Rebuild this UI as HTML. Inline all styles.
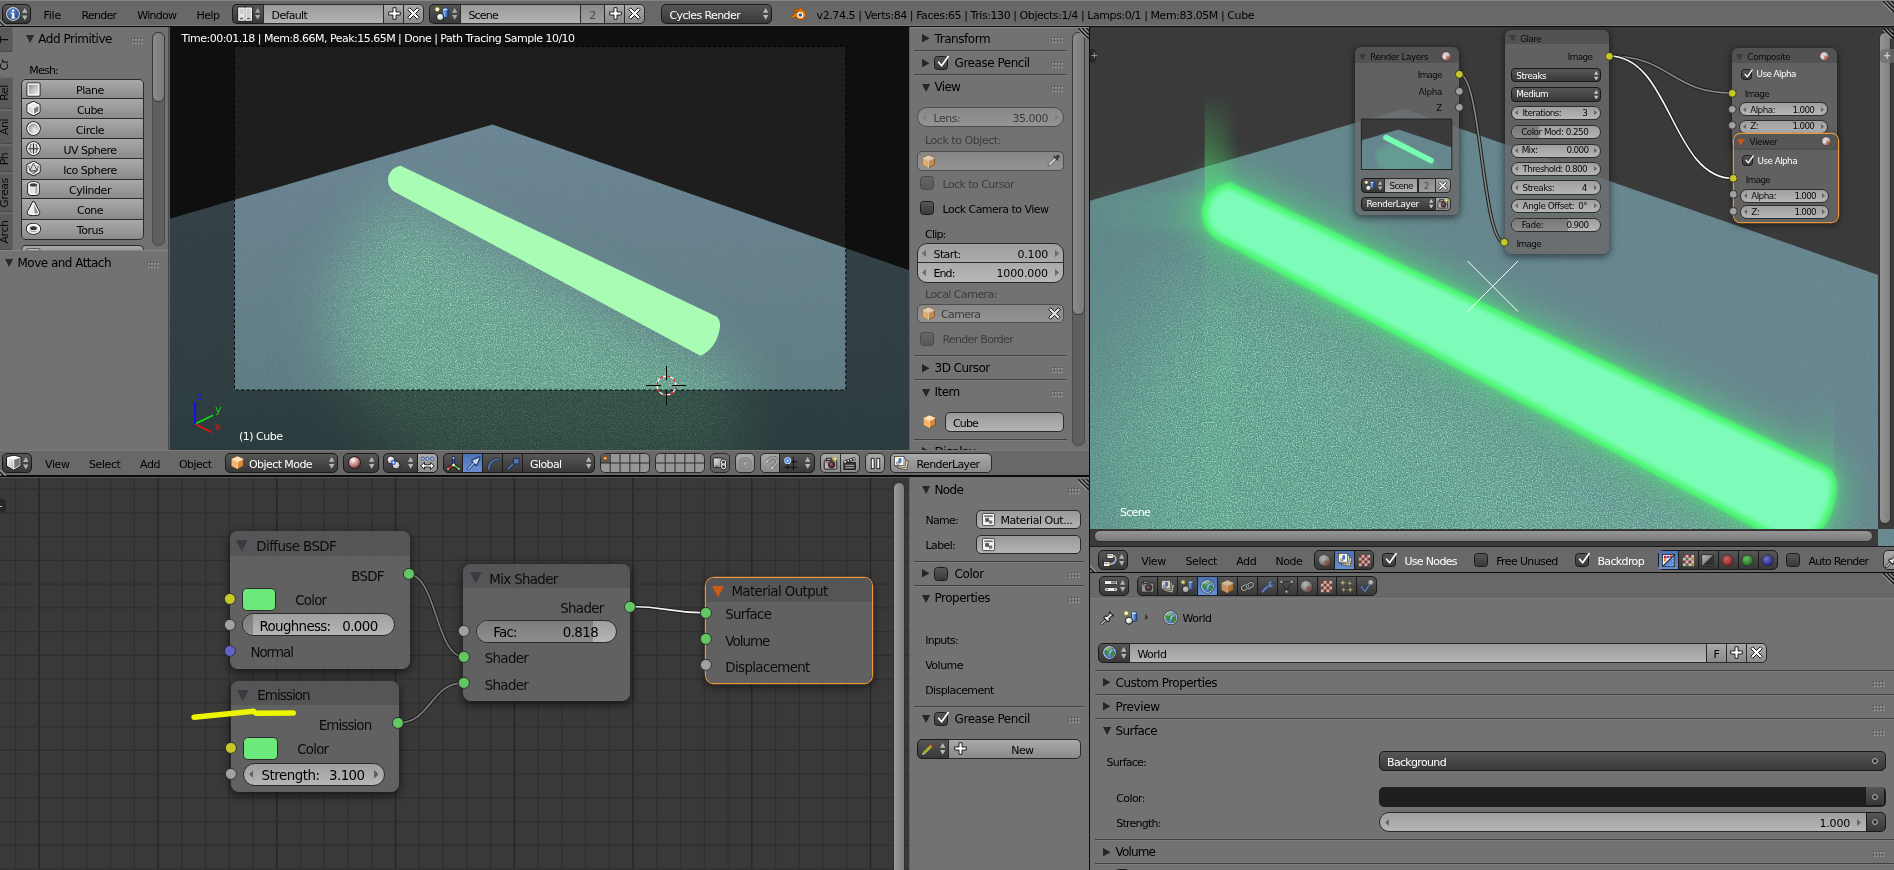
<!DOCTYPE html><html><head><meta charset="utf-8"><title>Blender</title><style>
html,body{margin:0;padding:0;background:#727272;}
body{width:1894px;height:870px;overflow:hidden;position:relative;font-family:"DejaVu Sans","Liberation Sans",sans-serif;}
.a{position:absolute;box-sizing:border-box}
.t{position:absolute;white-space:nowrap;font-family:"DejaVu Sans","Liberation Sans",sans-serif;}
.num{border:1px solid #2a2a2a;background:linear-gradient(#9f9f9f,#b6b6b6);}
.menu{border:1px solid #1a1a1a;background:linear-gradient(#565656,#383838);}
.tool{border:1px solid #2a2a2a;background:linear-gradient(#a9a9a9,#8a8a8a);}
.txt{border:1px solid #2a2a2a;background:linear-gradient(#999,#b4b4b4);}
.opt{border:1px solid #1a1a1a;background:linear-gradient(#565656,#3a3a3a);border-radius:3.5px}
.sel{background:linear-gradient(#4a72b4,#668ed0);}
.sb{border:1px solid #333;background:linear-gradient(90deg,#8c8c8c,#7a7a7a);}
.sbh{border:1px solid #333;background:linear-gradient(#8c8c8c,#7a7a7a);}
.node{border-radius:8px;background:rgba(100,100,100,.93);box-shadow:0 3px 9px 1px rgba(0,0,0,.55);}
.nhdr{border-radius:8px 8px 0 0;background:rgba(70,68,76,.45);}
</style></head><body><div id="root" style="position:absolute;left:0;top:0;width:1894px;height:870px;will-change:transform">
<div class="a " style="left:0px;top:0px;width:1894px;height:26px;background:#686868;border-top:1px solid #858585"></div>
<div class="a " style="left:0px;top:26px;width:1894px;height:1px;background:#0a0a0a"></div>
<div class="a " style="left:0px;top:27px;width:1089px;height:423px;background:#727272"></div>
<div class="a " style="left:0px;top:450px;width:1089px;height:26px;background:#686868"></div>
<div class="a " style="left:0px;top:475px;width:1089px;height:2px;background:#0a0a0a"></div>
<div class="a grid" style="left:0px;top:477px;width:909px;height:393px;background:#393939"></div>
<div class="a " style="left:909px;top:477px;width:180px;height:393px;background:#727272"></div>
<div class="a " style="left:1089px;top:27px;width:1px;height:843px;background:#0a0a0a"></div>
<div class="a " style="left:1090px;top:27px;width:804px;height:520px;background:#3a3a3a"></div>
<div class="a " style="left:1090px;top:546px;width:804px;height:1px;background:#1c1c1c"></div>
<div class="a " style="left:1090px;top:547px;width:804px;height:25px;background:#686868"></div>
<div class="a " style="left:1090px;top:572px;width:804px;height:1px;background:#0a0a0a"></div>
<div class="a " style="left:1090px;top:573px;width:804px;height:297px;background:#727272"></div>
<div class="a " style="left:1090px;top:573px;width:804px;height:25px;background:#686868"></div>
<svg class="a" style="left:169px;top:27px;" width="740" height="423" viewBox="169 27 740 423"><defs><linearGradient id="flo" x1="0" y1="124" x2="0" y2="450" gradientUnits="userSpaceOnUse"><stop offset="0" stop-color="#6a8593"/><stop offset=".5" stop-color="#637f89"/><stop offset=".8" stop-color="#5d7c82"/><stop offset="1" stop-color="#54767a"/></linearGradient><filter id="bl40" x="-50%" y="-50%" width="200%" height="200%"><feGaussianBlur stdDeviation="30"/></filter><filter id="bl12" x="-50%" y="-50%" width="200%" height="200%"><feGaussianBlur stdDeviation="14"/></filter><filter id="nz" x="0" y="0" width="100%" height="100%"><feTurbulence type="fractalNoise" baseFrequency="0.85" numOctaves="2" seed="7"/><feColorMatrix values="0 0 0 0 .42  0 0 0 0 .82  0 0 0 0 .58  2.2 0 0 0 -.98"/></filter><filter id="nzd" x="0" y="0" width="100%" height="100%"><feTurbulence type="fractalNoise" baseFrequency="0.9" numOctaves="2" seed="11"/><feColorMatrix values="0 0 0 0 .27  0 0 0 0 .33  0 0 0 0 .4  1.6 0 0 0 -.75"/></filter><mask id="gm3"><rect x="169" y="27" width="740" height="423" fill="#000"/><g filter="url(#bl40)"><path d="M392 195 L700 356 L740 380 L735 470 L430 470 L350 400 L330 300z" fill="#fff"/></g></mask><clipPath id="floorclip"><path d="M492.5 124.5 L909 270.3 V450 H169 V219z"/></clipPath></defs><rect x="169" y="27" width="740" height="423" fill="#1e1e1e"/><path d="M492.5 124.5 L909 270.3 V450 H169 V219z" fill="url(#flo)"/><g clip-path="url(#floorclip)"><g filter="url(#bl40)" opacity=".36"><path d="M392 195 L700 356 L740 380 L735 470 L430 470 L350 400 L330 300z" fill="#66d095"/></g><rect x="169" y="27" width="740" height="423" filter="url(#nzd)" opacity=".5"/><rect x="169" y="27" width="740" height="423" filter="url(#nz)" mask="url(#gm3)"/></g><path d="M400.6 165.7 L716 316.2 Q720.5 319 720 327 Q717 348 700.4 355.8 L394 191.5 A14.3 14.3 0 0 1 400.6 165.7z" fill="#a8fcb4"/><path d="M169 27H909V450H169z M234.5 46.5V390H845.8V46.5z" fill="#000" fill-opacity=".5" fill-rule="evenodd"/><rect x="234.5" y="46.5" width="611.3" height="343.5" fill="none" stroke="#000" stroke-width="1" stroke-dasharray="3 2.5"/><g fill="none"><circle cx="666.5" cy="385.5" r="9.5" stroke="#fff" stroke-width="1.2"/><circle cx="666.5" cy="385.5" r="9.5" stroke="#e01010" stroke-width="1.2" stroke-dasharray="3.7 3.76"/><path d="M666.5 366V380M666.5 391V405M646 385.5H661M672 385.5H686" stroke="#000" stroke-width="1"/></g><path d="M195 424L213 415.300" stroke="#10e010" stroke-width="1.800"/><path d="M195 424L212 432.500" stroke="#e81010" stroke-width="1.800"/><path d="M195 424.500V402" stroke="#1010f0" stroke-width="2.100"/></svg>
<div class="a " style="left:169px;top:27px;width:1px;height:423px;background:#5c5c5c"></div>
<div class="t" style="left:181.60px;top:29.72px;font-size:11px;line-height:17px;letter-spacing:-0.512px;color:#fff;">Time:00:01.18 | Mem:8.66M, Peak:15.65M | Done | Path Tracing Sample 10/10</div>
<div class="t" style="left:239.00px;top:427.72px;font-size:11px;line-height:17px;letter-spacing:-0.498px;color:#fff;">(1) Cube</div>
<div class="t" style="left:197.00px;top:388.22px;font-size:11px;line-height:17px;letter-spacing:0.000px;color:#1a1af0;">z</div>
<div class="t" style="left:215.00px;top:401.22px;font-size:11px;line-height:17px;letter-spacing:0.000px;color:#18d018;">y</div>
<div class="t" style="left:214.50px;top:418.22px;font-size:11px;line-height:17px;letter-spacing:0.000px;color:#e01818;">x</div>
<div class="a " style="left:0px;top:25px;width:1894px;height:1px;background:#7c7c7c"></div>
<div class="a menu" style="left:2px;top:4px;width:29px;height:20px;border-radius:5px"></div>
<svg class="a" style="left:5px;top:6px;" width="16" height="16" viewBox="0 0 16 16"><defs><radialGradient id="gi" cx=".4" cy=".3" r=".8"><stop offset="0" stop-color="#5b8ad0"/><stop offset="1" stop-color="#1c3f7c"/></radialGradient></defs><circle cx="8" cy="8" r="6.6" fill="url(#gi)" stroke="#e8e8e8" stroke-width="1.1"/><circle cx="8" cy="8" r="7.3" fill="none" stroke="#222" stroke-width=".6"/><rect x="7" y="3.6" width="2.2" height="2" fill="#fff"/><path d="M6.2 6.8h3v4.6h1.1v1.2H6v-1.2h1.1V8H6.2z" fill="#fff"/></svg>
<svg class="a" style="left:21.65px;top:7.825px;" width="5.7" height="12.35" viewBox="0 0 6 13"><path d="M0 5.200L3 0L6 5.200z M0 7.800L3 13L6 7.800z" fill="#b0b0b0"/></svg>
<div class="t" style="left:43.40px;top:6.62px;font-size:11px;line-height:17px;letter-spacing:-0.177px;color:#000;">File</div>
<div class="t" style="left:81.60px;top:6.62px;font-size:11px;line-height:17px;letter-spacing:-0.760px;color:#000;">Render</div>
<div class="t" style="left:137.20px;top:6.62px;font-size:11px;line-height:17px;letter-spacing:-0.695px;color:#000;">Window</div>
<div class="t" style="left:196.50px;top:6.62px;font-size:11px;line-height:17px;letter-spacing:-0.569px;color:#000;">Help</div>
<div class="a menu" style="left:232px;top:4px;width:32px;height:20px;border-radius:5px 0 0 5px;border-right:none"></div>
<svg class="a" style="left:236.5px;top:6px;" width="16" height="16" viewBox="0 0 16 16"><rect x="1.800" y="2" width="5.400" height="7" fill="#c8c8c8" stroke="#161616" stroke-width="2.600"/><rect x="1.800" y="9.800" width="5.400" height="4.400" fill="#c8c8c8" stroke="#161616" stroke-width="2.600"/><rect x="8.800" y="2" width="5.600" height="12.200" fill="#c8c8c8" stroke="#161616" stroke-width="2.600"/><rect x="1.800" y="2" width="5.400" height="7" fill="#cdcdcd" stroke="#fbfbfb" stroke-width="1.100"/><rect x="1.800" y="9.800" width="5.400" height="4.400" fill="#cdcdcd" stroke="#fbfbfb" stroke-width="1.100"/><rect x="8.800" y="2" width="5.600" height="12.200" fill="#cdcdcd" stroke="#fbfbfb" stroke-width="1.100"/><rect x="3" y="12.200" width="3" height="1" fill="#444"/><rect x="10" y="12.200" width="3.200" height="1" fill="#444"/></svg>
<svg class="a" style="left:254.8px;top:8.15px;" width="5.4" height="11.7" viewBox="0 0 6 13"><path d="M0 5.200L3 0L6 5.200z M0 7.800L3 13L6 7.800z" fill="#a6a6a6"/></svg>
<div class="a txt" style="left:263px;top:4px;width:121px;height:20px;border-radius:0;border-left:1px solid #2a2a2a"></div>
<div class="t" style="left:271.60px;top:6.62px;font-size:11px;line-height:17px;letter-spacing:-0.670px;color:#000;">Default</div>
<div class="a tool" style="left:383px;top:4px;width:21px;height:20px;border-radius:0;border-left:1px solid #2a2a2a"></div>
<svg class="a" style="left:386.5px;top:6px;" width="15" height="15" viewBox="0 0 16 16"><path d="M6.400 1.800h3.200v4.600h4.600v3.200h-4.600v4.600h-3.200v-4.600h-4.600v-3.200h4.600z" fill="#fff" stroke="#151515" stroke-width="1" stroke-linejoin="round"/></svg>
<div class="a tool" style="left:403px;top:4px;width:21px;height:20px;border-radius:0 5px 5px 0"></div>
<svg class="a" style="left:405.5px;top:6px;" width="15" height="15" viewBox="0 0 16 16"><g transform="rotate(45 8 8)"><path d="M6.500 .800h3v5.700h5.700v3h-5.700v5.700h-3v-5.700h-5.700v-3h5.700z" fill="#fff" stroke="#151515" stroke-width="1" stroke-linejoin="round"/></g></svg>
<div class="a menu" style="left:429px;top:4px;width:32px;height:20px;border-radius:5px 0 0 5px;border-right:none"></div>
<svg class="a" style="left:434px;top:6px;" width="16" height="16" viewBox="0 0 16 16"><defs><radialGradient id="gs" cx=".4" cy=".35" r=".75"><stop offset="0" stop-color="#fff"/><stop offset=".6" stop-color="#d0d0d0"/><stop offset="1" stop-color="#6a6a6a"/></radialGradient><linearGradient id="gc" x1="0" x2="1"><stop offset="0" stop-color="#cfe2fb"/><stop offset=".45" stop-color="#5d8fdc"/><stop offset="1" stop-color="#1f4a9a"/></linearGradient><radialGradient id="gl" cx=".5" cy=".5" r=".5"><stop offset="0" stop-color="#fff"/><stop offset=".45" stop-color="#fff"/><stop offset=".6" stop-color="#d9cf3a"/><stop offset="1" stop-color="#b0a820" stop-opacity=".2"/></radialGradient></defs><path d="M8.800 3.200C8.800 1.500 14.200 1.500 14.200 3.200V10.300C14.200 12 8.800 12 8.800 10.300z" fill="url(#gc)" stroke="#15306a" stroke-width=".9"/><ellipse cx="11.500" cy="3.300" rx="2.300" ry=".9" fill="#e6f0ff" opacity=".8"/><circle cx="6.200" cy="11" r="3.700" fill="url(#gs)" stroke="#1c1c1c" stroke-width="1"/><circle cx="3.300" cy="3.300" r="2.700" fill="url(#gl)"/></svg>
<svg class="a" style="left:451.7px;top:8.15px;" width="5.4" height="11.7" viewBox="0 0 6 13"><path d="M0 5.200L3 0L6 5.200z M0 7.800L3 13L6 7.800z" fill="#a6a6a6"/></svg>
<div class="a txt" style="left:460px;top:4px;width:121px;height:20px;border-radius:0"></div>
<div class="t" style="left:468.40px;top:6.62px;font-size:11px;line-height:17px;letter-spacing:-0.788px;color:#000;">Scene</div>
<div class="a txt" style="left:580px;top:4px;width:25px;height:20px;border-radius:0;background:linear-gradient(#8c8c8c,#9d9d9d)"></div>
<div class="t" style="left:589.28px;top:6.62px;font-size:11px;line-height:17px;letter-spacing:-0.560px;color:#4a4a4a;">2</div>
<div class="a tool" style="left:604px;top:4px;width:21px;height:20px;border-radius:0"></div>
<svg class="a" style="left:607.5px;top:6px;" width="15" height="15" viewBox="0 0 16 16"><path d="M6.400 1.800h3.200v4.600h4.600v3.200h-4.600v4.600h-3.200v-4.600h-4.600v-3.200h4.600z" fill="#fff" stroke="#151515" stroke-width="1" stroke-linejoin="round"/></svg>
<div class="a tool" style="left:624px;top:4px;width:21px;height:20px;border-radius:0 5px 5px 0"></div>
<svg class="a" style="left:626.5px;top:6px;" width="15" height="15" viewBox="0 0 16 16"><g transform="rotate(45 8 8)"><path d="M6.500 .800h3v5.700h5.700v3h-5.700v5.700h-3v-5.700h-5.700v-3h5.700z" fill="#fff" stroke="#151515" stroke-width="1" stroke-linejoin="round"/></g></svg>
<div class="a menu" style="left:661px;top:4px;width:111px;height:20px;border-radius:5px"></div>
<div class="t" style="left:669.40px;top:6.62px;font-size:11px;line-height:17px;letter-spacing:-0.596px;color:#fff;">Cycles Render</div>
<svg class="a" style="left:763.3px;top:8.15px;" width="5.4" height="11.7" viewBox="0 0 6 13"><path d="M0 5.200L3 0L6 5.200z M0 7.800L3 13L6 7.800z" fill="#b8b8b8"/></svg>
<svg class="a" style="left:790px;top:6px;" width="16" height="16" viewBox="0 0 16 16"><path d="M1 10.5L8.2 5H3.8V3.4h6.3L8.3 1.9 9.4.8 15 5.8c1.6 1.9 1.2 5.6-1.7 7.2-2.700 1.500-6.400.600-7.700-2.200L2.200 12z" fill="#ea7600" stroke="#7a3c00" stroke-width=".5"/><circle cx="10.3" cy="9" r="3.1" fill="#fff"/><circle cx="10.3" cy="9" r="1.8" fill="#265787"/></svg>
<div class="t" style="left:816.60px;top:6.62px;font-size:11px;line-height:17px;letter-spacing:-0.428px;color:#000;">v2.74.5 | Verts:84 | Faces:65 | Tris:130 | Objects:1/4 | Lamps:0/1 | Mem:83.05M | Cube</div>
<div class="a " style="left:0px;top:27px;width:13px;height:223px;background:#656565"></div>
<div class="a " style="left:0px;top:27px;width:12px;height:25px;background:#595959;border-radius:3px 0 0 3px;border-top:1px solid #6a6a6a;border-bottom:1px solid #474747;"></div>
<div class="t" style="left:4.2px;top:39.5px;font-size:11px;line-height:15px;letter-spacing:-0.538px;color:#0a0a0a;transform:translate(-50%,-50%) rotate(-90deg)">T</div>
<div class="a " style="left:0px;top:52px;width:13px;height:25px;background:#727272;border-radius:3px 0 0 3px;"></div>
<div class="t" style="left:4.2px;top:64.5px;font-size:11px;line-height:15px;letter-spacing:-0.488px;color:#0a0a0a;transform:translate(-50%,-50%) rotate(-90deg)">Cr</div>
<div class="a " style="left:0px;top:77px;width:12px;height:32px;background:#595959;border-radius:3px 0 0 3px;border-top:1px solid #6a6a6a;border-bottom:1px solid #474747;"></div>
<div class="t" style="left:4.2px;top:93px;font-size:11px;line-height:15px;letter-spacing:-0.453px;color:#0a0a0a;transform:translate(-50%,-50%) rotate(-90deg)">Rel</div>
<div class="a " style="left:0px;top:110px;width:12px;height:34px;background:#595959;border-radius:3px 0 0 3px;border-top:1px solid #6a6a6a;border-bottom:1px solid #474747;"></div>
<div class="t" style="left:4.2px;top:127px;font-size:11px;line-height:15px;letter-spacing:-0.468px;color:#0a0a0a;transform:translate(-50%,-50%) rotate(-90deg)">Ani</div>
<div class="a " style="left:0px;top:145px;width:12px;height:27px;background:#595959;border-radius:3px 0 0 3px;border-top:1px solid #6a6a6a;border-bottom:1px solid #474747;"></div>
<div class="t" style="left:4.2px;top:158.5px;font-size:11px;line-height:15px;letter-spacing:-0.544px;color:#0a0a0a;transform:translate(-50%,-50%) rotate(-90deg)">Ph</div>
<div class="a " style="left:0px;top:173px;width:12px;height:39px;background:#595959;border-radius:3px 0 0 3px;border-top:1px solid #6a6a6a;border-bottom:1px solid #474747;"></div>
<div class="t" style="left:4.2px;top:192.5px;font-size:11px;line-height:15px;letter-spacing:-0.513px;color:#0a0a0a;transform:translate(-50%,-50%) rotate(-90deg)">Greas</div>
<div class="a " style="left:0px;top:213px;width:12px;height:37px;background:#595959;border-radius:3px 0 0 3px;border-top:1px solid #6a6a6a;border-bottom:1px solid #474747;"></div>
<div class="t" style="left:4.2px;top:231.5px;font-size:11px;line-height:15px;letter-spacing:-0.497px;color:#0a0a0a;transform:translate(-50%,-50%) rotate(-90deg)">Arch</div>
<svg class="a" style="left:26px;top:35.3px;" width="8.2" height="8" viewBox="0 0 8.2 8"><path d="M0 0H8.2L4.1 8z" fill="#2a2a2a" fill-opacity="1"/></svg>
<div class="t" style="left:38.30px;top:30.04px;font-size:12px;line-height:18px;letter-spacing:-0.484px;color:#000;">Add Primitive</div>
<svg class="a" style="left:130.6px;top:37.6px;" width="12" height="7" viewBox="0 0 12 7"><rect x="0" y="0.0" width="1.3" height="1.3" fill="#4c4c4c"/><rect x="1" y="1.0" width="1.4" height="1.4" fill="#a4a4a4"/><rect x="0" y="3.5" width="1.3" height="1.3" fill="#4c4c4c"/><rect x="1" y="4.5" width="1.4" height="1.4" fill="#a4a4a4"/><rect x="3" y="0.0" width="1.3" height="1.3" fill="#4c4c4c"/><rect x="4" y="1.0" width="1.4" height="1.4" fill="#a4a4a4"/><rect x="3" y="3.5" width="1.3" height="1.3" fill="#4c4c4c"/><rect x="4" y="4.5" width="1.4" height="1.4" fill="#a4a4a4"/><rect x="6" y="0.0" width="1.3" height="1.3" fill="#4c4c4c"/><rect x="7" y="1.0" width="1.4" height="1.4" fill="#a4a4a4"/><rect x="6" y="3.5" width="1.3" height="1.3" fill="#4c4c4c"/><rect x="7" y="4.5" width="1.4" height="1.4" fill="#a4a4a4"/><rect x="9" y="0.0" width="1.3" height="1.3" fill="#4c4c4c"/><rect x="10" y="1.0" width="1.4" height="1.4" fill="#a4a4a4"/><rect x="9" y="3.5" width="1.3" height="1.3" fill="#4c4c4c"/><rect x="10" y="4.5" width="1.4" height="1.4" fill="#a4a4a4"/></svg>
<div class="a " style="left:152px;top:32px;width:13px;height:214px;background:#5f5f5f;border:1px solid #4c4c4c;border-radius:6px"></div>
<div class="a sb" style="left:152px;top:32px;width:13px;height:70px;border-radius:6px;border-color:#3a3a3a"></div>
<div class="t" style="left:29.30px;top:61.72px;font-size:11px;line-height:17px;letter-spacing:-0.794px;color:#000;">Mesh:</div>
<div class="a tool" style="left:21px;top:79px;width:123px;height:161px;border-radius:5px;background:#2c2c2c"></div>
<div class="a " style="left:22px;top:80px;width:121px;height:18px;border-radius:4px 4px 0 0;background:linear-gradient(#a9a9a9,#8b8b8b)"></div>
<svg class="a" style="left:25.5px;top:81.55px;" width="15" height="15" viewBox="0 0 16 16"><defs><linearGradient id="gmi" x1="0" y1="0" x2="1" y2="1"><stop offset="0" stop-color="#8c8c8c"/><stop offset="1" stop-color="#f2f2f2"/></linearGradient><radialGradient id="gmr" cx=".6" cy=".65" r=".7"><stop offset="0" stop-color="#f4f4f4"/><stop offset="1" stop-color="#8a8a8a"/></radialGradient></defs><path d="M2.2 2.2H13.8V13.8H2.2z" fill="none" stroke="#161616" stroke-width="3.3" stroke-linejoin="round"/><path d="M2.2 2.2H13.8V13.8H2.2z" fill="url(#gmi)" stroke="#fbfbfb" stroke-width="1.5" stroke-linejoin="round"/></svg>
<div class="t" style="left:76.12px;top:82.37px;font-size:11px;line-height:17px;letter-spacing:-0.483px;color:#000;">Plane</div>
<div class="a " style="left:22px;top:99px;width:121px;height:19px;background:linear-gradient(#a9a9a9,#8b8b8b)"></div>
<div class="a " style="left:22px;top:98px;width:121px;height:1px;background:#2c2c2c"></div>
<svg class="a" style="left:25.5px;top:101.25px;" width="15" height="15" viewBox="0 0 16 16"><defs><linearGradient id="gmi" x1="0" y1="0" x2="1" y2="1"><stop offset="0" stop-color="#8c8c8c"/><stop offset="1" stop-color="#f2f2f2"/></linearGradient><radialGradient id="gmr" cx=".6" cy=".65" r=".7"><stop offset="0" stop-color="#f4f4f4"/><stop offset="1" stop-color="#8a8a8a"/></radialGradient></defs><path d="M8 1.6L13.800 4.400V11.400L8 14.600L2.200 11.400V4.400z" fill="none" stroke="#161616" stroke-width="3.3" stroke-linejoin="round"/><path d="M8 1.6L13.800 4.400V11.400L8 14.600L2.200 11.400V4.400z" fill="#e9e9e9" stroke="#fbfbfb" stroke-width="1.5" stroke-linejoin="round"/><path d="M8 7.600L13.100 5V11L8 13.800z" fill="#7e7e7e"/><path d="M8 7.600V13.800L2.900 11V5z" fill="#d9d9d9"/><path d="M2.900 4.800L8 7.500L13.100 4.800" fill="none" stroke="#fbfbfb" stroke-width="1"/><path d="M8 7.500V14" stroke="#fbfbfb" stroke-width="1"/></svg>
<div class="t" style="left:76.93px;top:102.07px;font-size:11px;line-height:17px;letter-spacing:-0.568px;color:#000;">Cube</div>
<div class="a " style="left:22px;top:119px;width:121px;height:19px;background:linear-gradient(#a9a9a9,#8b8b8b)"></div>
<div class="a " style="left:22px;top:118px;width:121px;height:1px;background:#2c2c2c"></div>
<svg class="a" style="left:25.5px;top:121.1px;" width="15" height="15" viewBox="0 0 16 16"><defs><linearGradient id="gmi" x1="0" y1="0" x2="1" y2="1"><stop offset="0" stop-color="#8c8c8c"/><stop offset="1" stop-color="#f2f2f2"/></linearGradient><radialGradient id="gmr" cx=".6" cy=".65" r=".7"><stop offset="0" stop-color="#f4f4f4"/><stop offset="1" stop-color="#8a8a8a"/></radialGradient></defs><path d="M8 1.900A6.100 6.100 0 1 0 8 14.100A6.100 6.100 0 1 0 8 1.900z" fill="none" stroke="#161616" stroke-width="3.3" stroke-linejoin="round"/><path d="M8 1.900A6.100 6.100 0 1 0 8 14.100A6.100 6.100 0 1 0 8 1.900z" fill="url(#gmr)" stroke="#fbfbfb" stroke-width="1.5" stroke-linejoin="round"/></svg>
<div class="t" style="left:75.79px;top:121.92px;font-size:11px;line-height:17px;letter-spacing:-0.412px;color:#000;">Circle</div>
<div class="a " style="left:22px;top:139px;width:121px;height:19px;background:linear-gradient(#a9a9a9,#8b8b8b)"></div>
<div class="a " style="left:22px;top:138px;width:121px;height:1px;background:#2c2c2c"></div>
<svg class="a" style="left:25.5px;top:141.1px;" width="15" height="15" viewBox="0 0 16 16"><defs><linearGradient id="gmi" x1="0" y1="0" x2="1" y2="1"><stop offset="0" stop-color="#8c8c8c"/><stop offset="1" stop-color="#f2f2f2"/></linearGradient><radialGradient id="gmr" cx=".6" cy=".65" r=".7"><stop offset="0" stop-color="#f4f4f4"/><stop offset="1" stop-color="#8a8a8a"/></radialGradient></defs><path d="M8 1.900A6.100 6.100 0 1 0 8 14.100A6.100 6.100 0 1 0 8 1.900z" fill="none" stroke="#161616" stroke-width="3.3" stroke-linejoin="round"/><path d="M8 1.900A6.100 6.100 0 1 0 8 14.100A6.100 6.100 0 1 0 8 1.900z" fill="#dcdcdc" stroke="#fbfbfb" stroke-width="1.5" stroke-linejoin="round"/><path d="M8 2.500V13.500M2.500 8.300H13.500" stroke="#2a2a2a" stroke-width="1.100" fill="none"/><path d="M5.500 3.200C3.800 6 3.800 10 5.500 12.800M10.500 3.200C12.200 6 12.200 10 10.500 12.800" stroke="#444" stroke-width=".9" fill="none"/></svg>
<div class="t" style="left:63.40px;top:141.92px;font-size:11px;line-height:17px;letter-spacing:-0.514px;color:#000;">UV Sphere</div>
<div class="a " style="left:22px;top:159px;width:121px;height:20px;background:linear-gradient(#a9a9a9,#8b8b8b)"></div>
<div class="a " style="left:22px;top:158px;width:121px;height:1px;background:#2c2c2c"></div>
<svg class="a" style="left:25.5px;top:161.35px;" width="15" height="15" viewBox="0 0 16 16"><defs><linearGradient id="gmi" x1="0" y1="0" x2="1" y2="1"><stop offset="0" stop-color="#8c8c8c"/><stop offset="1" stop-color="#f2f2f2"/></linearGradient><radialGradient id="gmr" cx=".6" cy=".65" r=".7"><stop offset="0" stop-color="#f4f4f4"/><stop offset="1" stop-color="#8a8a8a"/></radialGradient></defs><path d="M8 1.500L13.900 4.700V11.300L8 14.500L2.100 11.300V4.700z" fill="none" stroke="#161616" stroke-width="3.3" stroke-linejoin="round"/><path d="M8 1.500L13.900 4.700V11.300L8 14.500L2.100 11.300V4.700z" fill="#dadada" stroke="#fbfbfb" stroke-width="1.5" stroke-linejoin="round"/><path d="M8 2.300L4.200 10.300H11.800zM2.800 5L4.200 10.300L8 13.800L11.800 10.300L13.200 5" fill="none" stroke="#303030" stroke-width=".8"/><path d="M8 13.800L11.800 10.300H8z" fill="#6a6a6a"/><path d="M8 13.800L4.200 10.300H8z" fill="#9a9a9a"/></svg>
<div class="t" style="left:63.19px;top:162.17px;font-size:11px;line-height:17px;letter-spacing:-0.466px;color:#000;">Ico Sphere</div>
<div class="a " style="left:22px;top:180px;width:121px;height:18px;background:linear-gradient(#a9a9a9,#8b8b8b)"></div>
<div class="a " style="left:22px;top:179px;width:121px;height:1px;background:#2c2c2c"></div>
<svg class="a" style="left:25.5px;top:181.35px;" width="15" height="15" viewBox="0 0 16 16"><defs><linearGradient id="gmi" x1="0" y1="0" x2="1" y2="1"><stop offset="0" stop-color="#8c8c8c"/><stop offset="1" stop-color="#f2f2f2"/></linearGradient><radialGradient id="gmr" cx=".6" cy=".65" r=".7"><stop offset="0" stop-color="#f4f4f4"/><stop offset="1" stop-color="#8a8a8a"/></radialGradient></defs><path d="M3 4V12.200C3 15 13 15 13 12.200V4C13 1.200 3 1.200 3 4z" fill="none" stroke="#161616" stroke-width="3.3" stroke-linejoin="round"/><path d="M3 4V12.200C3 15 13 15 13 12.200V4C13 1.200 3 1.200 3 4z" fill="#e4e4e4" stroke="#fbfbfb" stroke-width="1.5" stroke-linejoin="round"/><ellipse cx="8" cy="4.200" rx="3.900" ry="1.700" fill="#3c3c3c"/><path d="M10 5.500V13.500C11.500 13.300 12.300 12.800 12.300 12.200V4.800z" fill="#aaa"/></svg>
<div class="t" style="left:69.05px;top:182.17px;font-size:11px;line-height:17px;letter-spacing:-0.455px;color:#000;">Cylinder</div>
<div class="a " style="left:22px;top:199px;width:121px;height:20px;background:linear-gradient(#a9a9a9,#8b8b8b)"></div>
<div class="a " style="left:22px;top:198px;width:121px;height:1px;background:#2c2c2c"></div>
<svg class="a" style="left:25.5px;top:201.3px;" width="15" height="15" viewBox="0 0 16 16"><defs><linearGradient id="gmi" x1="0" y1="0" x2="1" y2="1"><stop offset="0" stop-color="#8c8c8c"/><stop offset="1" stop-color="#f2f2f2"/></linearGradient><radialGradient id="gmr" cx=".6" cy=".65" r=".7"><stop offset="0" stop-color="#f4f4f4"/><stop offset="1" stop-color="#8a8a8a"/></radialGradient></defs><path d="M8 1.600L13.600 12.400C13.600 15 2.400 15 2.400 12.400z" fill="none" stroke="#161616" stroke-width="3.3" stroke-linejoin="round"/><path d="M8 1.600L13.600 12.400C13.600 15 2.400 15 2.400 12.400z" fill="#ececec" stroke="#fbfbfb" stroke-width="1.5" stroke-linejoin="round"/><path d="M8.200 2.800L9.500 13.700C11.500 13.500 12.900 13 12.900 12.300z" fill="#8a8a8a"/></svg>
<div class="t" style="left:77.05px;top:202.12px;font-size:11px;line-height:17px;letter-spacing:-0.563px;color:#000;">Cone</div>
<div class="a " style="left:22px;top:220px;width:121px;height:19px;border-radius:0 0 4px 4px;background:linear-gradient(#a9a9a9,#8b8b8b)"></div>
<div class="a " style="left:22px;top:219px;width:121px;height:1px;background:#2c2c2c"></div>
<svg class="a" style="left:25.5px;top:221.4px;" width="15" height="15" viewBox="0 0 16 16"><defs><linearGradient id="gmi" x1="0" y1="0" x2="1" y2="1"><stop offset="0" stop-color="#8c8c8c"/><stop offset="1" stop-color="#f2f2f2"/></linearGradient><radialGradient id="gmr" cx=".6" cy=".65" r=".7"><stop offset="0" stop-color="#f4f4f4"/><stop offset="1" stop-color="#8a8a8a"/></radialGradient></defs><path d="M8 3.800C3.500 3.800 1.600 6 1.600 8.400C1.600 10.800 4 13 8 13C12 13 14.400 10.800 14.400 8.400C14.400 6 12.500 3.800 8 3.800z" fill="none" stroke="#161616" stroke-width="3.3" stroke-linejoin="round"/><path d="M8 3.800C3.500 3.800 1.600 6 1.600 8.400C1.600 10.800 4 13 8 13C12 13 14.400 10.800 14.400 8.400C14.400 6 12.500 3.800 8 3.800z" fill="#e6e6e6" stroke="#fbfbfb" stroke-width="1.5" stroke-linejoin="round"/><ellipse cx="8" cy="7.600" rx="3.300" ry="1.600" fill="#3a3a3a" stroke="#161616" stroke-width=".8"/><path d="M2.500 9.500C4 12.300 12 12.300 13.500 9.500C12.500 11 3.500 11 2.500 9.500z" fill="#999"/></svg>
<div class="t" style="left:76.75px;top:222.22px;font-size:11px;line-height:17px;letter-spacing:-0.461px;color:#000;">Torus</div>
<div class="a tool" style="left:21px;top:245px;width:123px;height:12px;border-radius:5px 5px 0 0;border-bottom:none"></div>
<svg class="a" style="left:25.5px;top:247.5px;" width="15" height="15" viewBox="0 0 16 16"><defs><linearGradient id="gmi" x1="0" y1="0" x2="1" y2="1"><stop offset="0" stop-color="#8c8c8c"/><stop offset="1" stop-color="#f2f2f2"/></linearGradient><radialGradient id="gmr" cx=".6" cy=".65" r=".7"><stop offset="0" stop-color="#f4f4f4"/><stop offset="1" stop-color="#8a8a8a"/></radialGradient></defs><path d="M2.2 2.2H13.8V13.8H2.2z" fill="none" stroke="#161616" stroke-width="3.3" stroke-linejoin="round"/><path d="M2.2 2.2H13.8V13.8H2.2z" fill="url(#gmi)" stroke="#fbfbfb" stroke-width="1.5" stroke-linejoin="round"/></svg>
<div class="a " style="left:0px;top:250px;width:168px;height:200px;background:#727272"></div>
<div class="a " style="left:0px;top:250px;width:168px;height:1px;background:#858585"></div>
<svg class="a" style="left:5px;top:259.3px;" width="8.2" height="8" viewBox="0 0 8.2 8"><path d="M0 0H8.2L4.1 8z" fill="#2a2a2a" fill-opacity="1"/></svg>
<div class="t" style="left:17.50px;top:254.34px;font-size:12px;line-height:18px;letter-spacing:-0.523px;color:#000;">Move and Attach</div>
<svg class="a" style="left:146.8px;top:261.8px;" width="12" height="7" viewBox="0 0 12 7"><rect x="0" y="0.0" width="1.3" height="1.3" fill="#4c4c4c"/><rect x="1" y="1.0" width="1.4" height="1.4" fill="#a4a4a4"/><rect x="0" y="3.5" width="1.3" height="1.3" fill="#4c4c4c"/><rect x="1" y="4.5" width="1.4" height="1.4" fill="#a4a4a4"/><rect x="3" y="0.0" width="1.3" height="1.3" fill="#4c4c4c"/><rect x="4" y="1.0" width="1.4" height="1.4" fill="#a4a4a4"/><rect x="3" y="3.5" width="1.3" height="1.3" fill="#4c4c4c"/><rect x="4" y="4.5" width="1.4" height="1.4" fill="#a4a4a4"/><rect x="6" y="0.0" width="1.3" height="1.3" fill="#4c4c4c"/><rect x="7" y="1.0" width="1.4" height="1.4" fill="#a4a4a4"/><rect x="6" y="3.5" width="1.3" height="1.3" fill="#4c4c4c"/><rect x="7" y="4.5" width="1.4" height="1.4" fill="#a4a4a4"/><rect x="9" y="0.0" width="1.3" height="1.3" fill="#4c4c4c"/><rect x="10" y="1.0" width="1.4" height="1.4" fill="#a4a4a4"/><rect x="9" y="3.5" width="1.3" height="1.3" fill="#4c4c4c"/><rect x="10" y="4.5" width="1.4" height="1.4" fill="#a4a4a4"/></svg>
<div class="a " style="left:168px;top:27px;width:1px;height:423px;background:#4a4a4a"></div>
<div class="a " style="left:909px;top:27px;width:1px;height:423px;background:#5e5e5e"></div>
<svg class="a" style="left:922.3px;top:34.4px;" width="7.6" height="8.4" viewBox="0 0 7.6 8.4"><path d="M0 0V8.4L7.6 4.2z" fill="#262626"/></svg>
<div class="t" style="left:934.60px;top:30.04px;font-size:12px;line-height:18px;letter-spacing:-0.455px;color:#000;">Transform</div>
<svg class="a" style="left:1050.6px;top:37.4px;" width="12" height="7" viewBox="0 0 12 7"><rect x="0" y="0.0" width="1.3" height="1.3" fill="#4c4c4c"/><rect x="1" y="1.0" width="1.4" height="1.4" fill="#a4a4a4"/><rect x="0" y="3.5" width="1.3" height="1.3" fill="#4c4c4c"/><rect x="1" y="4.5" width="1.4" height="1.4" fill="#a4a4a4"/><rect x="3" y="0.0" width="1.3" height="1.3" fill="#4c4c4c"/><rect x="4" y="1.0" width="1.4" height="1.4" fill="#a4a4a4"/><rect x="3" y="3.5" width="1.3" height="1.3" fill="#4c4c4c"/><rect x="4" y="4.5" width="1.4" height="1.4" fill="#a4a4a4"/><rect x="6" y="0.0" width="1.3" height="1.3" fill="#4c4c4c"/><rect x="7" y="1.0" width="1.4" height="1.4" fill="#a4a4a4"/><rect x="6" y="3.5" width="1.3" height="1.3" fill="#4c4c4c"/><rect x="7" y="4.5" width="1.4" height="1.4" fill="#a4a4a4"/><rect x="9" y="0.0" width="1.3" height="1.3" fill="#4c4c4c"/><rect x="10" y="1.0" width="1.4" height="1.4" fill="#a4a4a4"/><rect x="9" y="3.5" width="1.3" height="1.3" fill="#4c4c4c"/><rect x="10" y="4.5" width="1.4" height="1.4" fill="#a4a4a4"/></svg>
<div class="a " style="left:914px;top:50px;width:153px;height:1px;background:#414141"></div>
<div class="a " style="left:914px;top:51px;width:153px;height:1px;background:#7e7e7e"></div>
<svg class="a" style="left:922.3px;top:58.7px;" width="7.6" height="8.4" viewBox="0 0 7.6 8.4"><path d="M0 0V8.4L7.6 4.2z" fill="#262626"/></svg>
<div class="a opt" style="left:934px;top:56.2px;width:14px;height:14px;"><svg class="a" style="left:-0.5px;top:-3.2px" width="16.0" height="16.0" viewBox="0 0 16 16"><path d="M3.600 8.200L6.600 11.800L13.200 2.600" fill="none" stroke="#fff" stroke-width="1.750" stroke-linecap="round" stroke-linejoin="round"/></svg></div>
<div class="t" style="left:954.60px;top:54.34px;font-size:12px;line-height:18px;letter-spacing:-0.478px;color:#000;">Grease Pencil</div>
<svg class="a" style="left:1050.6px;top:61.7px;" width="12" height="7" viewBox="0 0 12 7"><rect x="0" y="0.0" width="1.3" height="1.3" fill="#4c4c4c"/><rect x="1" y="1.0" width="1.4" height="1.4" fill="#a4a4a4"/><rect x="0" y="3.5" width="1.3" height="1.3" fill="#4c4c4c"/><rect x="1" y="4.5" width="1.4" height="1.4" fill="#a4a4a4"/><rect x="3" y="0.0" width="1.3" height="1.3" fill="#4c4c4c"/><rect x="4" y="1.0" width="1.4" height="1.4" fill="#a4a4a4"/><rect x="3" y="3.5" width="1.3" height="1.3" fill="#4c4c4c"/><rect x="4" y="4.5" width="1.4" height="1.4" fill="#a4a4a4"/><rect x="6" y="0.0" width="1.3" height="1.3" fill="#4c4c4c"/><rect x="7" y="1.0" width="1.4" height="1.4" fill="#a4a4a4"/><rect x="6" y="3.5" width="1.3" height="1.3" fill="#4c4c4c"/><rect x="7" y="4.5" width="1.4" height="1.4" fill="#a4a4a4"/><rect x="9" y="0.0" width="1.3" height="1.3" fill="#4c4c4c"/><rect x="10" y="1.0" width="1.4" height="1.4" fill="#a4a4a4"/><rect x="9" y="3.5" width="1.3" height="1.3" fill="#4c4c4c"/><rect x="10" y="4.5" width="1.4" height="1.4" fill="#a4a4a4"/></svg>
<div class="a " style="left:914px;top:74px;width:153px;height:1px;background:#414141"></div>
<div class="a " style="left:914px;top:75px;width:153px;height:1px;background:#7e7e7e"></div>
<svg class="a" style="left:922px;top:83.5px;" width="8.2" height="8" viewBox="0 0 8.2 8"><path d="M0 0H8.2L4.1 8z" fill="#262626" fill-opacity="1"/></svg>
<div class="t" style="left:934.60px;top:78.34px;font-size:12px;line-height:18px;letter-spacing:-0.744px;color:#000;">View</div>
<svg class="a" style="left:1050.6px;top:85.7px;" width="12" height="7" viewBox="0 0 12 7"><rect x="0" y="0.0" width="1.3" height="1.3" fill="#4c4c4c"/><rect x="1" y="1.0" width="1.4" height="1.4" fill="#a4a4a4"/><rect x="0" y="3.5" width="1.3" height="1.3" fill="#4c4c4c"/><rect x="1" y="4.5" width="1.4" height="1.4" fill="#a4a4a4"/><rect x="3" y="0.0" width="1.3" height="1.3" fill="#4c4c4c"/><rect x="4" y="1.0" width="1.4" height="1.4" fill="#a4a4a4"/><rect x="3" y="3.5" width="1.3" height="1.3" fill="#4c4c4c"/><rect x="4" y="4.5" width="1.4" height="1.4" fill="#a4a4a4"/><rect x="6" y="0.0" width="1.3" height="1.3" fill="#4c4c4c"/><rect x="7" y="1.0" width="1.4" height="1.4" fill="#a4a4a4"/><rect x="6" y="3.5" width="1.3" height="1.3" fill="#4c4c4c"/><rect x="7" y="4.5" width="1.4" height="1.4" fill="#a4a4a4"/><rect x="9" y="0.0" width="1.3" height="1.3" fill="#4c4c4c"/><rect x="10" y="1.0" width="1.4" height="1.4" fill="#a4a4a4"/><rect x="9" y="3.5" width="1.3" height="1.3" fill="#4c4c4c"/><rect x="10" y="4.5" width="1.4" height="1.4" fill="#a4a4a4"/></svg>
<div class="a num" style="left:917px;top:107px;width:147px;height:20px;border-radius:10px;opacity:0.5;overflow:hidden;"></div>
<svg class="a" style="left:922px;top:113.5px;" width="4" height="7" viewBox="0 0 4 7"><path d="M4 0V7L0 3.500z" fill="#808080"/></svg>
<svg class="a" style="left:1055px;top:113.5px;" width="4" height="7" viewBox="0 0 4 7"><path d="M0 0V7L4 3.500z" fill="#808080"/></svg>
<div class="t" style="left:933.50px;top:109.92px;font-size:11px;line-height:17px;letter-spacing:-0.466px;color:#3c3c3c;">Lens:</div>
<div class="t" style="left:1012.59px;top:109.92px;font-size:11px;line-height:17px;letter-spacing:-0.513px;color:#3c3c3c;">35.000</div>
<div class="t" style="left:925.00px;top:132.02px;font-size:11px;line-height:17px;letter-spacing:-0.443px;color:#3c3c3c;">Lock to Object:</div>
<div class="a txt" style="left:917px;top:151px;width:147px;height:20px;border-radius:5px;opacity:.5"></div>
<svg class="a" style="left:921px;top:153.5px;opacity:0.75;" width="15" height="15" viewBox="0 0 16 16"><path d="M8 1.2L14.3 4.2V11.6L8 14.8L1.700 11.600V4.200z" fill="#d98a3a" stroke="#6b3d10" stroke-width=".8" stroke-linejoin="round"/><path d="M8 1.2L14.3 4.2L8 7.300L1.700 4.200z" fill="#ffe2b8"/><path d="M1.7 4.2L8 7.300V14.800L1.700 11.600z" fill="#f3b56f"/><path d="M8 7.300V14.8M1.7 4.2L8 7.300L14.300 4.200" fill="none" stroke="#fff3dd" stroke-width=".6"/></svg>
<svg class="a" style="left:1046px;top:153px;opacity:0.8;" width="15" height="15" viewBox="0 0 16 16"><path d="M2 14L3 11L9 5L11 7L5 13z" fill="#ddd" stroke="#333" stroke-width=".7" stroke-linejoin="round"/><path d="M8.500 3.500L12.500 7.500M10 5L12.500 2.500A1.600 1.600 0 0 1 14 4L11.500 6.500" fill="#444" stroke="#222" stroke-width="1.400" stroke-linecap="round"/></svg>
<div class="a opt" style="left:920px;top:176px;width:14px;height:14px;opacity:0.45;"></div>
<div class="t" style="left:942.50px;top:175.92px;font-size:11px;line-height:17px;letter-spacing:-0.556px;color:#3c3c3c;">Lock to Cursor</div>
<div class="a opt" style="left:920px;top:201px;width:14px;height:14px;"></div>
<div class="t" style="left:942.50px;top:200.62px;font-size:11px;line-height:17px;letter-spacing:-0.520px;color:#000;">Lock Camera to View</div>
<div class="t" style="left:925.00px;top:225.92px;font-size:11px;line-height:17px;letter-spacing:-0.796px;color:#000;">Clip:</div>
<div class="a num" style="left:917px;top:243px;width:147px;height:40px;border-radius:10px;overflow:hidden"></div>
<div class="a " style="left:918px;top:262px;width:145px;height:1px;background:#2c2c2c"></div>
<svg class="a" style="left:922px;top:249.5px;" width="4" height="7" viewBox="0 0 4 7"><path d="M4 0V7L0 3.500z" fill="#6a6a6a"/></svg>
<svg class="a" style="left:1055px;top:249.5px;" width="4" height="7" viewBox="0 0 4 7"><path d="M0 0V7L4 3.500z" fill="#6a6a6a"/></svg>
<svg class="a" style="left:922px;top:269px;" width="4" height="7" viewBox="0 0 4 7"><path d="M4 0V7L0 3.500z" fill="#6a6a6a"/></svg>
<svg class="a" style="left:1055px;top:269px;" width="4" height="7" viewBox="0 0 4 7"><path d="M0 0V7L4 3.500z" fill="#6a6a6a"/></svg>
<div class="t" style="left:933.50px;top:246.02px;font-size:11px;line-height:17px;letter-spacing:-0.597px;color:#000;">Start:</div>
<div class="t" style="left:1017.50px;top:246.02px;font-size:11px;line-height:17px;letter-spacing:-0.198px;color:#000;">0.100</div>
<div class="t" style="left:933.50px;top:265.42px;font-size:11px;line-height:17px;letter-spacing:-0.903px;color:#000;">End:</div>
<div class="t" style="left:996.50px;top:265.42px;font-size:11px;line-height:17px;letter-spacing:-0.124px;color:#000;">1000.000</div>
<div class="t" style="left:925.00px;top:286.02px;font-size:11px;line-height:17px;letter-spacing:-0.529px;color:#3c3c3c;">Local Camera:</div>
<div class="a txt" style="left:917px;top:304px;width:147px;height:19px;border-radius:5px;opacity:.5"></div>
<svg class="a" style="left:921px;top:306px;opacity:0.75;" width="15" height="15" viewBox="0 0 16 16"><path d="M8 1.2L14.3 4.2V11.6L8 14.8L1.700 11.600V4.200z" fill="#d98a3a" stroke="#6b3d10" stroke-width=".8" stroke-linejoin="round"/><path d="M8 1.2L14.3 4.2L8 7.300L1.700 4.200z" fill="#ffe2b8"/><path d="M1.7 4.2L8 7.300V14.800L1.700 11.600z" fill="#f3b56f"/><path d="M8 7.300V14.8M1.7 4.2L8 7.300L14.300 4.200" fill="none" stroke="#fff3dd" stroke-width=".6"/></svg>
<div class="t" style="left:941.00px;top:306.12px;font-size:11px;line-height:17px;letter-spacing:-0.611px;color:#3c3c3c;">Camera</div>
<svg class="a" style="left:1046.5px;top:305.5px;opacity:0.9;" width="15" height="15" viewBox="0 0 16 16"><g transform="rotate(45 8 8)"><path d="M6.500 .800h3v5.700h5.700v3h-5.700v5.700h-3v-5.700h-5.700v-3h5.700z" fill="#e8e8e8" stroke="#151515" stroke-width="1" stroke-linejoin="round"/></g></svg>
<div class="a opt" style="left:920px;top:331.5px;width:14px;height:14px;opacity:0.45;"></div>
<div class="t" style="left:942.50px;top:331.02px;font-size:11px;line-height:17px;letter-spacing:-0.695px;color:#3c3c3c;">Render Border</div>
<div class="a " style="left:914px;top:355px;width:153px;height:1px;background:#414141"></div>
<div class="a " style="left:914px;top:356px;width:153px;height:1px;background:#7e7e7e"></div>
<svg class="a" style="left:922.3px;top:363.5px;" width="7.6" height="8.4" viewBox="0 0 7.6 8.4"><path d="M0 0V8.4L7.6 4.2z" fill="#262626"/></svg>
<div class="t" style="left:934.60px;top:359.14px;font-size:12px;line-height:18px;letter-spacing:-0.571px;color:#000;">3D Cursor</div>
<svg class="a" style="left:1050.6px;top:366.5px;" width="12" height="7" viewBox="0 0 12 7"><rect x="0" y="0.0" width="1.3" height="1.3" fill="#4c4c4c"/><rect x="1" y="1.0" width="1.4" height="1.4" fill="#a4a4a4"/><rect x="0" y="3.5" width="1.3" height="1.3" fill="#4c4c4c"/><rect x="1" y="4.5" width="1.4" height="1.4" fill="#a4a4a4"/><rect x="3" y="0.0" width="1.3" height="1.3" fill="#4c4c4c"/><rect x="4" y="1.0" width="1.4" height="1.4" fill="#a4a4a4"/><rect x="3" y="3.5" width="1.3" height="1.3" fill="#4c4c4c"/><rect x="4" y="4.5" width="1.4" height="1.4" fill="#a4a4a4"/><rect x="6" y="0.0" width="1.3" height="1.3" fill="#4c4c4c"/><rect x="7" y="1.0" width="1.4" height="1.4" fill="#a4a4a4"/><rect x="6" y="3.5" width="1.3" height="1.3" fill="#4c4c4c"/><rect x="7" y="4.5" width="1.4" height="1.4" fill="#a4a4a4"/><rect x="9" y="0.0" width="1.3" height="1.3" fill="#4c4c4c"/><rect x="10" y="1.0" width="1.4" height="1.4" fill="#a4a4a4"/><rect x="9" y="3.5" width="1.3" height="1.3" fill="#4c4c4c"/><rect x="10" y="4.5" width="1.4" height="1.4" fill="#a4a4a4"/></svg>
<div class="a " style="left:914px;top:379px;width:153px;height:1px;background:#414141"></div>
<div class="a " style="left:914px;top:380px;width:153px;height:1px;background:#7e7e7e"></div>
<svg class="a" style="left:922px;top:388.5px;" width="8.2" height="8" viewBox="0 0 8.2 8"><path d="M0 0H8.2L4.1 8z" fill="#262626" fill-opacity="1"/></svg>
<div class="t" style="left:934.60px;top:383.34px;font-size:12px;line-height:18px;letter-spacing:-0.579px;color:#000;">Item</div>
<svg class="a" style="left:1050.6px;top:390.7px;" width="12" height="7" viewBox="0 0 12 7"><rect x="0" y="0.0" width="1.3" height="1.3" fill="#4c4c4c"/><rect x="1" y="1.0" width="1.4" height="1.4" fill="#a4a4a4"/><rect x="0" y="3.5" width="1.3" height="1.3" fill="#4c4c4c"/><rect x="1" y="4.5" width="1.4" height="1.4" fill="#a4a4a4"/><rect x="3" y="0.0" width="1.3" height="1.3" fill="#4c4c4c"/><rect x="4" y="1.0" width="1.4" height="1.4" fill="#a4a4a4"/><rect x="3" y="3.5" width="1.3" height="1.3" fill="#4c4c4c"/><rect x="4" y="4.5" width="1.4" height="1.4" fill="#a4a4a4"/><rect x="6" y="0.0" width="1.3" height="1.3" fill="#4c4c4c"/><rect x="7" y="1.0" width="1.4" height="1.4" fill="#a4a4a4"/><rect x="6" y="3.5" width="1.3" height="1.3" fill="#4c4c4c"/><rect x="7" y="4.5" width="1.4" height="1.4" fill="#a4a4a4"/><rect x="9" y="0.0" width="1.3" height="1.3" fill="#4c4c4c"/><rect x="10" y="1.0" width="1.4" height="1.4" fill="#a4a4a4"/><rect x="9" y="3.5" width="1.3" height="1.3" fill="#4c4c4c"/><rect x="10" y="4.5" width="1.4" height="1.4" fill="#a4a4a4"/></svg>
<svg class="a" style="left:922px;top:414px;" width="15" height="15" viewBox="0 0 16 16"><path d="M8 1.2L14.3 4.2V11.6L8 14.8L1.700 11.600V4.200z" fill="#d98a3a" stroke="#6b3d10" stroke-width=".8" stroke-linejoin="round"/><path d="M8 1.2L14.3 4.2L8 7.300L1.700 4.200z" fill="#ffe2b8"/><path d="M1.7 4.2L8 7.300V14.800L1.700 11.600z" fill="#f3b56f"/><path d="M8 7.300V14.8M1.7 4.2L8 7.300L14.300 4.200" fill="none" stroke="#fff3dd" stroke-width=".6"/></svg>
<div class="a txt" style="left:945px;top:412px;width:119px;height:20px;border-radius:5px"></div>
<div class="t" style="left:953.00px;top:415.12px;font-size:11px;line-height:17px;letter-spacing:-0.851px;color:#000;">Cube</div>
<div class="a " style="left:914px;top:439px;width:153px;height:1px;background:#414141"></div>
<div class="a " style="left:914px;top:440px;width:153px;height:1px;background:#7e7e7e"></div>
<svg class="a" style="left:922.3px;top:447.3px;" width="7.6" height="8.4" viewBox="0 0 7.6 8.4"><path d="M0 0V8.4L7.6 4.2z" fill="#262626"/></svg>
<div class="t" style="left:934.60px;top:442.94px;font-size:12px;line-height:18px;letter-spacing:-0.462px;color:#000;">Display</div>
<svg class="a" style="left:1050.6px;top:450.3px;" width="12" height="7" viewBox="0 0 12 7"><rect x="0" y="0.0" width="1.3" height="1.3" fill="#4c4c4c"/><rect x="1" y="1.0" width="1.4" height="1.4" fill="#a4a4a4"/><rect x="0" y="3.5" width="1.3" height="1.3" fill="#4c4c4c"/><rect x="1" y="4.5" width="1.4" height="1.4" fill="#a4a4a4"/><rect x="3" y="0.0" width="1.3" height="1.3" fill="#4c4c4c"/><rect x="4" y="1.0" width="1.4" height="1.4" fill="#a4a4a4"/><rect x="3" y="3.5" width="1.3" height="1.3" fill="#4c4c4c"/><rect x="4" y="4.5" width="1.4" height="1.4" fill="#a4a4a4"/><rect x="6" y="0.0" width="1.3" height="1.3" fill="#4c4c4c"/><rect x="7" y="1.0" width="1.4" height="1.4" fill="#a4a4a4"/><rect x="6" y="3.5" width="1.3" height="1.3" fill="#4c4c4c"/><rect x="7" y="4.5" width="1.4" height="1.4" fill="#a4a4a4"/><rect x="9" y="0.0" width="1.3" height="1.3" fill="#4c4c4c"/><rect x="10" y="1.0" width="1.4" height="1.4" fill="#a4a4a4"/><rect x="9" y="3.5" width="1.3" height="1.3" fill="#4c4c4c"/><rect x="10" y="4.5" width="1.4" height="1.4" fill="#a4a4a4"/></svg>
<div class="a " style="left:1072px;top:32px;width:13px;height:414px;background:#5f5f5f;border:1px solid #4c4c4c;border-radius:6px"></div>
<div class="a sb" style="left:1072px;top:32px;width:13px;height:283px;border-radius:6px;border-color:#3a3a3a"></div>
<div class="a " style="left:910px;top:27px;width:179px;height:1px;background:#8a8a8a"></div>
<div class="a " style="left:0px;top:450px;width:1089px;height:26px;background:#686868"></div>
<div class="a " style="left:0px;top:450px;width:1089px;height:1px;background:#7a7a7a"></div>
<div class="a " style="left:0px;top:475px;width:1089px;height:2px;background:#0a0a0a"></div>
<div class="a menu" style="left:2px;top:453px;width:30px;height:20px;border-radius:5px"></div>
<svg class="a" style="left:6px;top:455px;" width="15.5" height="15.5" viewBox="0 0 16 16"><defs><linearGradient id="gv3" x1="0" y1="0" x2="1" y2="1"><stop offset="0" stop-color="#ffffff"/><stop offset="1" stop-color="#b0b0b0"/></linearGradient></defs><path d="M1.800 2.800L8 1.500L14.200 2.800V10.800L8 14.300L1.800 10.800z" fill="none" stroke="#141414" stroke-width="3.200" stroke-linejoin="round"/><path d="M1.800 2.800L8 1.500L14.200 2.800V10.800L8 14.300L1.800 10.800z" fill="#f4f4f4" stroke="#fbfbfb" stroke-width="1.300" stroke-linejoin="round"/><path d="M8 4.800L14.200 2.800V10.800L8 14.300z" fill="#767676"/><path d="M1.800 2.800L8 4.800V14.300L1.800 10.800z" fill="url(#gv3)"/><path d="M1.800 2.800L8 1.500L14.200 2.800L8 4.800z" fill="#fdfdfd"/><path d="M8 4.800V14.300" stroke="#fbfbfb" stroke-width=".8"/></svg>
<svg class="a" style="left:22.75px;top:456.825px;" width="5.7" height="12.35" viewBox="0 0 6 13"><path d="M0 5.200L3 0L6 5.200z M0 7.800L3 13L6 7.800z" fill="#b0b0b0"/></svg>
<div class="t" style="left:45.00px;top:456.22px;font-size:11px;line-height:17px;letter-spacing:-0.401px;color:#000;">View</div>
<div class="t" style="left:89.00px;top:456.22px;font-size:11px;line-height:17px;letter-spacing:-0.406px;color:#000;">Select</div>
<div class="t" style="left:140.00px;top:456.22px;font-size:11px;line-height:17px;letter-spacing:-0.432px;color:#000;">Add</div>
<div class="t" style="left:179.00px;top:456.22px;font-size:11px;line-height:17px;letter-spacing:-0.554px;color:#000;">Object</div>
<div class="a menu" style="left:225px;top:453px;width:113px;height:20px;border-radius:5px"></div>
<svg class="a" style="left:230px;top:455px;" width="15" height="15" viewBox="0 0 16 16"><path d="M8 1.2L14.3 4.2V11.6L8 14.8L1.700 11.600V4.200z" fill="#d98a3a" stroke="#6b3d10" stroke-width=".8" stroke-linejoin="round"/><path d="M8 1.2L14.3 4.2L8 7.300L1.700 4.200z" fill="#ffe2b8"/><path d="M1.7 4.2L8 7.300V14.800L1.700 11.600z" fill="#f3b56f"/><path d="M8 7.300V14.8M1.7 4.2L8 7.300L14.300 4.200" fill="none" stroke="#fff3dd" stroke-width=".6"/></svg>
<div class="t" style="left:249.00px;top:456.22px;font-size:11px;line-height:17px;letter-spacing:-0.572px;color:#fff;">Object Mode</div>
<svg class="a" style="left:328.8px;top:457.15px;" width="5.4" height="11.7" viewBox="0 0 6 13"><path d="M0 5.200L3 0L6 5.200z M0 7.800L3 13L6 7.800z" fill="#b8b8b8"/></svg>
<div class="a menu" style="left:343px;top:453px;width:36px;height:20px;border-radius:5px"></div>
<svg class="a" style="left:346.5px;top:455px;" width="15" height="15" viewBox="0 0 16 16"><defs><radialGradient id="gsh" cx=".38" cy=".3" r=".75"><stop offset="0" stop-color="#ffffff"/><stop offset=".25" stop-color="#e9c9c4"/><stop offset=".65" stop-color="#b9776e"/><stop offset="1" stop-color="#5a302c"/></radialGradient></defs><circle cx="8" cy="8" r="6.400" fill="url(#gsh)" stroke="#1c1c1c" stroke-width="1.100"/></svg>
<svg class="a" style="left:368.8px;top:457.15px;" width="5.4" height="11.7" viewBox="0 0 6 13"><path d="M0 5.200L3 0L6 5.200z M0 7.800L3 13L6 7.800z" fill="#b8b8b8"/></svg>
<div class="a menu" style="left:383px;top:453px;width:35px;height:20px;border-radius:5px 0 0 5px"></div>
<svg class="a" style="left:386px;top:455px;" width="15" height="15" viewBox="0 0 16 16"><defs><radialGradient id="gpv" cx=".4" cy=".35" r=".75"><stop offset="0" stop-color="#fff"/><stop offset="1" stop-color="#9a9a9a"/></radialGradient></defs><circle cx="5.200" cy="5.200" r="4.200" fill="url(#gpv)" stroke="#1c1c1c" stroke-width="1"/><circle cx="10.800" cy="10.800" r="4.200" fill="url(#gpv)" stroke="#1c1c1c" stroke-width="1"/><rect x="6.300" y="6.300" width="3.400" height="3.400" fill="#fff" stroke="#1646d8" stroke-width="1.200"/></svg>
<svg class="a" style="left:407.8px;top:457.15px;" width="5.4" height="11.7" viewBox="0 0 6 13"><path d="M0 5.200L3 0L6 5.200z M0 7.800L3 13L6 7.800z" fill="#b8b8b8"/></svg>
<div class="a tool" style="left:417px;top:453px;width:21px;height:20px;border-radius:0 5px 5px 0;border-color:#1a1a1a"></div>
<svg class="a" style="left:419.5px;top:455.5px;" width="15" height="15" viewBox="0 0 16 16"><circle cx="3" cy="2.800" r="1.600" fill="#dde6f8" stroke="#1d3f9a" stroke-width="1"/><circle cx="8" cy="2.800" r="1.600" fill="#dde6f8" stroke="#1d3f9a" stroke-width="1"/><circle cx="13" cy="2.800" r="1.600" fill="#dde6f8" stroke="#1d3f9a" stroke-width="1"/><path d="M.800 10.500L4.800 6.800V9.300H11.200V6.800L15.200 10.500L11.200 14.200V11.700H4.800V14.200z" fill="#fff" stroke="#1c1c1c" stroke-width="1" stroke-linejoin="round"/></svg>
<div class="a menu" style="left:443px;top:453px;width:152px;height:20px;border-radius:5px;overflow:hidden"></div>
<div class="a sel" style="left:463px;top:454px;width:20px;height:18px;"></div>
<div class="a " style="left:462px;top:454px;width:1px;height:18px;background:#1a1a1a"></div>
<div class="a " style="left:482px;top:454px;width:1px;height:18px;background:#1a1a1a"></div>
<div class="a " style="left:502px;top:454px;width:1px;height:18px;background:#1a1a1a"></div>
<div class="a " style="left:522px;top:454px;width:1px;height:18px;background:#1a1a1a"></div>
<svg class="a" style="left:445.5px;top:455.5px;" width="15" height="15" viewBox="0 0 16 16"><g stroke-linecap="round"><path d="M8 9.500V2" stroke="#151515" stroke-width="3.400"/><path d="M8 9.500L2.200 13.800" stroke="#151515" stroke-width="3.400"/><path d="M8 9.500L13.800 13.800" stroke="#151515" stroke-width="3.400"/><path d="M8 9.500V2" stroke="#2a56e8" stroke-width="1.800"/><path d="M8 9.500L2.200 13.800" stroke="#e8302a" stroke-width="1.800"/><path d="M8 9.500L13.800 13.800" stroke="#46d03a" stroke-width="1.800"/></g><circle cx="8" cy="9.500" r="1.300" fill="#fff"/><circle cx="8" cy="2" r=".9" fill="#cfe0ff"/><circle cx="2.200" cy="13.800" r=".9" fill="#ffd0d0"/><circle cx="13.800" cy="13.800" r=".9" fill="#e0ffd0"/></svg>
<svg class="a" style="left:465.5px;top:455.5px;" width="15" height="15" viewBox="0 0 16 16"><path d="M2.500 13.500L9 7L7 5L14 2L11 9L9 7" fill="#bcd2f4" stroke="#16305e" stroke-width="3" stroke-linejoin="round" stroke-linecap="round"/><path d="M2.500 13.500L9 7" stroke="#a9c4ee" stroke-width="1.500" stroke-linecap="round"/><path d="M7 5L14 2L11 9z" fill="#c6daf8" stroke="#c6daf8" stroke-width=".6" stroke-linejoin="round"/></svg>
<svg class="a" style="left:485.5px;top:455.5px;" width="15" height="15" viewBox="0 0 16 16"><path d="M3 13.500C3 7.500 7.500 3.500 13.500 3.500" fill="none" stroke="#1d2c48" stroke-width="3.400" stroke-linecap="round"/><path d="M3 13.500C3 7.500 7.500 3.500 13.500 3.500" fill="none" stroke="#5676a8" stroke-width="1.800" stroke-linecap="round"/></svg>
<svg class="a" style="left:505.5px;top:455.5px;" width="15" height="15" viewBox="0 0 16 16"><path d="M2.500 13.500L9 7" stroke="#1d2c48" stroke-width="3.400" stroke-linecap="round"/><path d="M2.500 13.500L9 7" stroke="#5676a8" stroke-width="1.800" stroke-linecap="round"/><rect x="8" y="2.500" width="6" height="6" fill="#5676a8" stroke="#1d2c48" stroke-width="1"/></svg>
<div class="t" style="left:530.00px;top:456.22px;font-size:11px;line-height:17px;letter-spacing:-0.598px;color:#fff;">Global</div>
<svg class="a" style="left:585.8px;top:457.15px;" width="5.4" height="11.7" viewBox="0 0 6 13"><path d="M0 5.200L3 0L6 5.200z M0 7.800L3 13L6 7.800z" fill="#b8b8b8"/></svg>
<svg class="a" style="left:600px;top:453px;" width="50" height="20" viewBox="0 0 50 20"><rect x=".5" y=".5" width="49" height="19" rx="4" fill="#979797" stroke="#2a2a2a"/><path d="M1 4.500Q1 1 4.500 1H9.800V10H1z" fill="#5c5c5c"/><path d="M10.20 1V19" stroke="#2a2a2a" stroke-width="1"/><path d="M20.05 1V19" stroke="#2a2a2a" stroke-width="1"/><path d="M29.90 1V19" stroke="#2a2a2a" stroke-width="1"/><path d="M39.75 1V19" stroke="#2a2a2a" stroke-width="1"/><path d="M1 10H49" stroke="#2a2a2a" stroke-width="1"/><circle cx="5.300" cy="5.300" r="2" fill="#f59a3a" stroke="#7a3c00" stroke-width=".9"/><circle cx="5" cy="5" r=".8" fill="#ffd9a0"/></svg>
<svg class="a" style="left:655px;top:453px;" width="50" height="20" viewBox="0 0 50 20"><rect x=".5" y=".5" width="49" height="19" rx="4" fill="#979797" stroke="#2a2a2a"/><path d="M10.20 1V19" stroke="#2a2a2a" stroke-width="1"/><path d="M20.05 1V19" stroke="#2a2a2a" stroke-width="1"/><path d="M29.90 1V19" stroke="#2a2a2a" stroke-width="1"/><path d="M39.75 1V19" stroke="#2a2a2a" stroke-width="1"/><path d="M1 10H49" stroke="#2a2a2a" stroke-width="1"/></svg>
<div class="a tool" style="left:710px;top:453px;width:20px;height:20px;border-radius:5px;background:linear-gradient(#6e6e6e,#5e5e5e)"></div>
<svg class="a" style="left:712px;top:455.5px;" width="15" height="15" viewBox="0 0 16 16"><defs><linearGradient id="glk" x1="0" y1="0" x2="1" y2="1"><stop offset="0" stop-color="#e8e8e8"/><stop offset="1" stop-color="#8a8a8a"/></linearGradient></defs><rect x="1.300" y="2" width="10.500" height="10.500" rx="1" fill="url(#glk)" stroke="#1c1c1c" stroke-width="1"/><rect x="2.800" y="10.300" width="4" height="1" fill="#444"/><g fill="none"><rect x="10.300" y="4.300" width="4" height="5.500" rx="2" stroke="#1c1c1c" stroke-width="2.600"/><rect x="10.300" y="8.300" width="4" height="5.500" rx="2" stroke="#1c1c1c" stroke-width="2.600"/><rect x="10.300" y="4.300" width="4" height="5.500" rx="2" stroke="#f4f4f4" stroke-width="1.200"/><rect x="10.300" y="8.300" width="4" height="5.500" rx="2" stroke="#f4f4f4" stroke-width="1.200"/></g></svg>
<div class="a tool" style="left:735px;top:453px;width:20px;height:20px;border-radius:5px"></div>
<svg class="a" style="left:737.5px;top:455.5px;" width="15" height="15" viewBox="0 0 16 16"><circle cx="8" cy="8" r="6" fill="#9a9a9a" stroke="#808080" stroke-width="1.300"/><circle cx="8" cy="8" r="2.800" fill="#a8a8a8" stroke="#808080" stroke-width="1.300"/></svg>
<div class="a tool" style="left:760px;top:453px;width:20px;height:20px;border-radius:5px 0 0 5px"></div>
<svg class="a" style="left:762.5px;top:455.5px;" width="15" height="15" viewBox="0 0 16 16"><g fill="none" stroke-linecap="butt"><path d="M3.300 6.700L7.800 2.800A4.200 4.200 0 0 1 13.500 9L9 13.200" stroke="#707070" stroke-width="4.200"/><path d="M3.300 6.700L7.800 2.800A4.200 4.200 0 0 1 13.500 9L9 13.200" stroke="#a2a2a2" stroke-width="2.400"/><path d="M3.300 6.700L5 5.200M9 13.200L10.600 11.700" stroke="#c8c8c8" stroke-width="2.400"/></g></svg>
<div class="a menu" style="left:779px;top:453px;width:36px;height:20px;border-radius:0 5px 5px 0"></div>
<svg class="a" style="left:783px;top:455.5px;" width="15" height="15" viewBox="0 0 16 16"><path d="M5 1V15M11 1V15M1 6H15M1 12H15" stroke="#111" stroke-width="1.100"/><circle cx="5" cy="5" r="3.300" fill="#3d7ee8" stroke="#e6f0ff" stroke-width="1"/><circle cx="5" cy="5" r="1.100" fill="#fff"/></svg>
<svg class="a" style="left:805.3px;top:457.15px;" width="5.4" height="11.7" viewBox="0 0 6 13"><path d="M0 5.200L3 0L6 5.200z M0 7.800L3 13L6 7.800z" fill="#b8b8b8"/></svg>
<div class="a tool" style="left:820px;top:453px;width:40px;height:20px;border-radius:5px"></div>
<div class="a " style="left:839.5px;top:454px;width:1px;height:18px;background:#2c2c2c"></div>
<svg class="a" style="left:822.5px;top:455.5px;" width="15" height="15" viewBox="0 0 16 16"><rect x="1.300" y="4.300" width="13.400" height="9.700" rx="1.200" fill="#b4b4b4" stroke="#1c1c1c" stroke-width="1"/><rect x="3.800" y="2.300" width="5" height="2.500" fill="#9a9a9a" stroke="#1c1c1c" stroke-width=".9"/><rect x="1.800" y="6.200" width="12.400" height="1.500" fill="#8a8a8a"/><circle cx="9.200" cy="9.300" r="3.500" fill="#3c3c3c" stroke="#1c1c1c" stroke-width=".9"/><circle cx="9.200" cy="9.300" r="2" fill="#7a3040"/><circle cx="8.500" cy="8.600" r=".8" fill="#d8a0a8"/><rect x="2.600" y="5.100" width="2" height="1.100" fill="#d03030"/><path d="M12.800 -.200L13.700 2.300L16.200 3.200L13.700 4.100L12.800 6.600L11.900 4.100L9.400 3.200L11.900 2.300z" fill="#fff08a" stroke="#a88a10" stroke-width=".4"/></svg>
<svg class="a" style="left:842px;top:455.5px;" width="15" height="15" viewBox="0 0 16 16"><rect x="2" y="7" width="12.500" height="7.500" fill="#333" stroke="#111" stroke-width=".8"/><path d="M1.500 5.500L13.500 1.500L14.300 3.800L2.300 7.800z" fill="#eee" stroke="#111" stroke-width=".7"/><path d="M4.500 4.500L6 6.500M7.500 3.500L9 5.500M10.500 2.500L12 4.500" stroke="#111" stroke-width="1.300"/><path d="M3.500 10H13M3.500 12.500H13" stroke="#ddd" stroke-width=".8"/></svg>
<div class="a tool" style="left:865px;top:453px;width:20px;height:20px;border-radius:5px"></div>
<svg class="a" style="left:867.5px;top:455.5px;" width="15" height="15" viewBox="0 0 16 16"><rect x="3.500" y="2.500" width="3" height="11" fill="#fff" stroke="#111" stroke-width=".9"/><rect x="9.500" y="2.500" width="3" height="11" fill="#fff" stroke="#111" stroke-width=".9"/></svg>
<div class="a tool" style="left:890px;top:453px;width:102px;height:20px;border-radius:5px"></div>
<svg class="a" style="left:893px;top:455px;" width="16" height="16" viewBox="0 0 16 16"><rect x="5" y="5" width="9.500" height="9" fill="#e8d9a8" stroke="#333" stroke-width=".7" transform="rotate(12 10 10)"/><rect x="3" y="3" width="9.500" height="9" fill="#f4f4f4" stroke="#333" stroke-width=".7" transform="rotate(6 8 8)"/><rect x="1.500" y="1.500" width="9.500" height="9" fill="#fff" stroke="#333" stroke-width=".7"/><rect x="5.500" y="3" width="3" height="5" rx="1.200" fill="#4a78c8"/><circle cx="5" cy="8" r="1.600" fill="#bbb" stroke="#444" stroke-width=".4"/><circle cx="3.200" cy="3.200" r=".9" fill="#f3d84a"/></svg>
<div class="t" style="left:916.50px;top:456.22px;font-size:11px;line-height:17px;letter-spacing:-0.621px;color:#000;">RenderLayer</div>
<svg class="a" style="left:0px;top:477px;" width="909" height="393" viewBox="0 477 909 393"><rect x="14.95" y="477" width="1.2" height="393" fill="#2f2f2f"/><rect x="38.70" y="477" width="1.2" height="393" fill="#242424"/><rect x="62.45" y="477" width="1.2" height="393" fill="#2f2f2f"/><rect x="86.20" y="477" width="1.2" height="393" fill="#2f2f2f"/><rect x="109.95" y="477" width="1.2" height="393" fill="#2f2f2f"/><rect x="133.70" y="477" width="1.2" height="393" fill="#2f2f2f"/><rect x="157.45" y="477" width="1.2" height="393" fill="#242424"/><rect x="181.20" y="477" width="1.2" height="393" fill="#2f2f2f"/><rect x="204.95" y="477" width="1.2" height="393" fill="#2f2f2f"/><rect x="228.70" y="477" width="1.2" height="393" fill="#2f2f2f"/><rect x="252.45" y="477" width="1.2" height="393" fill="#2f2f2f"/><rect x="276.20" y="477" width="1.2" height="393" fill="#242424"/><rect x="299.95" y="477" width="1.2" height="393" fill="#2f2f2f"/><rect x="323.70" y="477" width="1.2" height="393" fill="#2f2f2f"/><rect x="347.45" y="477" width="1.2" height="393" fill="#2f2f2f"/><rect x="371.20" y="477" width="1.2" height="393" fill="#2f2f2f"/><rect x="394.95" y="477" width="1.2" height="393" fill="#242424"/><rect x="418.70" y="477" width="1.2" height="393" fill="#2f2f2f"/><rect x="442.45" y="477" width="1.2" height="393" fill="#2f2f2f"/><rect x="466.20" y="477" width="1.2" height="393" fill="#2f2f2f"/><rect x="489.95" y="477" width="1.2" height="393" fill="#2f2f2f"/><rect x="513.70" y="477" width="1.2" height="393" fill="#242424"/><rect x="537.45" y="477" width="1.2" height="393" fill="#2f2f2f"/><rect x="561.20" y="477" width="1.2" height="393" fill="#2f2f2f"/><rect x="584.95" y="477" width="1.2" height="393" fill="#2f2f2f"/><rect x="608.70" y="477" width="1.2" height="393" fill="#2f2f2f"/><rect x="632.45" y="477" width="1.2" height="393" fill="#242424"/><rect x="656.20" y="477" width="1.2" height="393" fill="#2f2f2f"/><rect x="679.95" y="477" width="1.2" height="393" fill="#2f2f2f"/><rect x="703.70" y="477" width="1.2" height="393" fill="#2f2f2f"/><rect x="727.45" y="477" width="1.2" height="393" fill="#2f2f2f"/><rect x="751.20" y="477" width="1.2" height="393" fill="#242424"/><rect x="774.95" y="477" width="1.2" height="393" fill="#2f2f2f"/><rect x="798.70" y="477" width="1.2" height="393" fill="#2f2f2f"/><rect x="822.45" y="477" width="1.2" height="393" fill="#2f2f2f"/><rect x="846.20" y="477" width="1.2" height="393" fill="#2f2f2f"/><rect x="869.95" y="477" width="1.2" height="393" fill="#242424"/><rect x="893.70" y="477" width="1.2" height="393" fill="#2f2f2f"/><rect x="0" y="488.50" width="909" height="1.2" fill="#2f2f2f"/><rect x="0" y="512.25" width="909" height="1.2" fill="#2f2f2f"/><rect x="0" y="536.00" width="909" height="1.2" fill="#2f2f2f"/><rect x="0" y="559.75" width="909" height="1.2" fill="#2f2f2f"/><rect x="0" y="583.50" width="909" height="1.2" fill="#2f2f2f"/><rect x="0" y="607.25" width="909" height="1.2" fill="#2f2f2f"/><rect x="0" y="631.00" width="909" height="1.2" fill="#2f2f2f"/><rect x="0" y="654.75" width="909" height="1.2" fill="#2f2f2f"/><rect x="0" y="678.50" width="909" height="1.2" fill="#2f2f2f"/><rect x="0" y="702.25" width="909" height="1.2" fill="#2f2f2f"/><rect x="0" y="726.00" width="909" height="1.2" fill="#2f2f2f"/><rect x="0" y="749.75" width="909" height="1.2" fill="#2f2f2f"/><rect x="0" y="773.50" width="909" height="1.2" fill="#2f2f2f"/><rect x="0" y="797.25" width="909" height="1.2" fill="#2f2f2f"/><rect x="0" y="821.00" width="909" height="1.2" fill="#2f2f2f"/><rect x="0" y="844.75" width="909" height="1.2" fill="#2f2f2f"/><rect x="0" y="868.50" width="909" height="1.2" fill="#2f2f2f"/></svg>
<div class="a " style="left:0px;top:477px;width:909px;height:1px;background:#585858"></div>
<div class="a " style="left:0px;top:499px;width:6px;height:14px;background:#282828;border-radius:0 4px 4px 0"></div>
<div class="a " style="left:0px;top:505.5px;width:2px;height:1.5px;background:#bbb"></div>
<div class="a sb" style="left:893px;top:482px;width:12px;height:400px;border-radius:6px;border-color:#303030;background:linear-gradient(90deg,#9a9a9a,#7e7e7e)"></div>
<svg class="a" style="left:0px;top:477px;" width="909" height="393" viewBox="0 477 909 393"><path d="M408.6 574.3C436.05 574.3 436.05 656.7 463.5 656.7" fill="none" stroke="#1a1a1a" stroke-width="3.6"/><path d="M408.6 574.3C436.05 574.3 436.05 656.7 463.5 656.7" fill="none" stroke="#7a7a7a" stroke-width="1.7"/><path d="M398 723C430.75 723 430.75 682.8 463.5 682.8" fill="none" stroke="#1a1a1a" stroke-width="3.6"/><path d="M398 723C430.75 723 430.75 682.8 463.5 682.8" fill="none" stroke="#7a7a7a" stroke-width="1.7"/><path d="M630 606.5C667.8 606.5 667.8 612.9 705.6 612.9" fill="none" stroke="#1a1a1a" stroke-width="3.6"/><path d="M630 606.5C667.8 606.5 667.8 612.9 705.6 612.9" fill="none" stroke="#f2f2f2" stroke-width="1.7"/></svg>
<div class="a node" style="left:230px;top:531px;width:180px;height:138px;border-radius:8px"><div class="a nhdr" style="left:0px;top:0px;width:180px;height:24.5px;border-radius:8px 8px 0 0"></div></div>
<div class="t" style="left:256.30px;top:537.07px;font-size:13.4px;line-height:19.4px;letter-spacing:-0.587px;color:#0c0c0c;">Diffuse BSDF</div>
<svg class="a" style="left:236.2px;top:540.4px;" width="11.6" height="11.4" viewBox="0 0 11.6 11.4"><path d="M0 0H11.6L5.8 11.4z" fill="#3b3a3e" fill-opacity="1"/></svg>
<div class="t" style="left:351.30px;top:566.77px;font-size:13.4px;line-height:19.4px;letter-spacing:-0.747px;color:#0c0c0c;">BSDF</div>
<div class="a " style="left:241.6px;top:587.7px;width:34.8px;height:23px;background:#6de87b;border:1px solid #2a2a2a;border-radius:4.5px"></div>
<div class="t" style="left:295.30px;top:591.27px;font-size:13.4px;line-height:19.4px;letter-spacing:-0.797px;color:#0c0c0c;">Color</div>
<div class="a num" style="left:241.6px;top:613.4px;width:153.8px;height:23px;border-radius:11.5px;overflow:hidden;"><div class="a" style="left:0;top:0;width:10.5px;height:100%;background:linear-gradient(#7c7c7c,#8e8e8e);border-radius:11.5px 0 0 11.5px"></div></div>
<div class="t" style="left:259.50px;top:616.97px;font-size:13.4px;line-height:19.4px;letter-spacing:-0.662px;color:#000;">Roughness:</div>
<div class="t" style="left:342.20px;top:616.97px;font-size:13.4px;line-height:19.4px;letter-spacing:-0.573px;color:#000;">0.000</div>
<div class="t" style="left:250.40px;top:643.17px;font-size:13.4px;line-height:19.4px;letter-spacing:-0.997px;color:#0c0c0c;">Normal</div>
<svg class="a" style="left:401.7px;top:567.4px;" width="13.8" height="13.8" viewBox="0 0 13.8 13.8"><circle cx="6.9" cy="6.9" r="5.5" fill="#63c763" stroke="#1e1e1e" stroke-opacity=".75" stroke-width="1"/></svg>
<svg class="a" style="left:223.3px;top:591.8px;" width="13.8" height="13.8" viewBox="0 0 13.8 13.8"><circle cx="6.9" cy="6.9" r="5.5" fill="#c7c729" stroke="#1e1e1e" stroke-opacity=".75" stroke-width="1"/></svg>
<svg class="a" style="left:223.3px;top:617.9px;" width="13.8" height="13.8" viewBox="0 0 13.8 13.8"><circle cx="6.9" cy="6.9" r="5.5" fill="#a1a1a1" stroke="#1e1e1e" stroke-opacity=".75" stroke-width="1"/></svg>
<svg class="a" style="left:223.3px;top:644.2px;" width="13.8" height="13.8" viewBox="0 0 13.8 13.8"><circle cx="6.9" cy="6.9" r="5.5" fill="#6363c7" stroke="#1e1e1e" stroke-opacity=".75" stroke-width="1"/></svg>
<div class="a node" style="left:231px;top:681px;width:167.5px;height:111px;border-radius:8px"><div class="a nhdr" style="left:0px;top:0px;width:167.5px;height:24px;border-radius:8px 8px 0 0"></div></div>
<div class="t" style="left:257.20px;top:686.07px;font-size:13.4px;line-height:19.4px;letter-spacing:-0.890px;color:#0c0c0c;">Emission</div>
<svg class="a" style="left:237.2px;top:689.6px;" width="11.6" height="11.4" viewBox="0 0 11.6 11.4"><path d="M0 0H11.6L5.8 11.4z" fill="#3b3a3e" fill-opacity="1"/></svg>
<div class="t" style="left:318.80px;top:716.07px;font-size:13.4px;line-height:19.4px;letter-spacing:-0.890px;color:#0c0c0c;">Emission</div>
<div class="a " style="left:242.5px;top:736.7px;width:35px;height:23px;background:#6de87b;border:1px solid #2a2a2a;border-radius:4.5px"></div>
<div class="t" style="left:297.30px;top:740.37px;font-size:13.4px;line-height:19.4px;letter-spacing:-0.797px;color:#0c0c0c;">Color</div>
<div class="a num" style="left:242.5px;top:763px;width:142px;height:23px;border-radius:11.5px;overflow:hidden;"></div>
<svg class="a" style="left:248.6px;top:770.23px;" width="4.88" height="8.54" viewBox="0 0 4 7"><path d="M4 0V7L0 3.500z" fill="#5e5e5e"/></svg>
<svg class="a" style="left:373.52px;top:770.23px;" width="4.88" height="8.54" viewBox="0 0 4 7"><path d="M0 0V7L4 3.500z" fill="#5e5e5e"/></svg>
<div class="t" style="left:261.50px;top:766.37px;font-size:13.4px;line-height:19.4px;letter-spacing:-0.498px;color:#000;">Strength:</div>
<div class="t" style="left:329.00px;top:766.37px;font-size:13.4px;line-height:19.4px;letter-spacing:-0.573px;color:#000;">3.100</div>
<svg class="a" style="left:391.1px;top:716.1px;" width="13.8" height="13.8" viewBox="0 0 13.8 13.8"><circle cx="6.9" cy="6.9" r="5.5" fill="#63c763" stroke="#1e1e1e" stroke-opacity=".75" stroke-width="1"/></svg>
<svg class="a" style="left:224.4px;top:740.5px;" width="13.8" height="13.8" viewBox="0 0 13.8 13.8"><circle cx="6.9" cy="6.9" r="5.5" fill="#c7c729" stroke="#1e1e1e" stroke-opacity=".75" stroke-width="1"/></svg>
<svg class="a" style="left:224.4px;top:766.6px;" width="13.8" height="13.8" viewBox="0 0 13.8 13.8"><circle cx="6.9" cy="6.9" r="5.5" fill="#a1a1a1" stroke="#1e1e1e" stroke-opacity=".75" stroke-width="1"/></svg>
<div class="a node" style="left:463.4px;top:563.8px;width:167px;height:137.4px;border-radius:8px"><div class="a nhdr" style="left:0px;top:0px;width:167px;height:24px;border-radius:8px 8px 0 0"></div></div>
<div class="t" style="left:489.30px;top:569.77px;font-size:13.4px;line-height:19.4px;letter-spacing:-0.654px;color:#0c0c0c;">Mix Shader</div>
<svg class="a" style="left:470px;top:572.4px;" width="11.6" height="11.4" viewBox="0 0 11.6 11.4"><path d="M0 0H11.6L5.8 11.4z" fill="#3b3a3e" fill-opacity="1"/></svg>
<div class="t" style="left:560.20px;top:599.27px;font-size:13.4px;line-height:19.4px;letter-spacing:-0.662px;color:#0c0c0c;">Shader</div>
<div class="a num numsl" style="left:475.9px;top:619.5px;width:140.7px;height:23px;border-radius:11.5px;overflow:hidden;"><div class="a" style="left:0;top:0;width:115.8px;height:100%;background:linear-gradient(#7c7c7c,#8e8e8e);border-radius:11.5px 0 0 11.5px"></div></div>
<div class="t" style="left:493.30px;top:622.87px;font-size:13.4px;line-height:19.4px;letter-spacing:-0.768px;color:#000;">Fac:</div>
<div class="t" style="left:562.70px;top:622.87px;font-size:13.4px;line-height:19.4px;letter-spacing:-0.573px;color:#000;">0.818</div>
<div class="t" style="left:484.70px;top:649.27px;font-size:13.4px;line-height:19.4px;letter-spacing:-0.662px;color:#0c0c0c;">Shader</div>
<div class="t" style="left:484.70px;top:676.27px;font-size:13.4px;line-height:19.4px;letter-spacing:-0.662px;color:#0c0c0c;">Shader</div>
<svg class="a" style="left:623.1px;top:599.6px;" width="13.8" height="13.8" viewBox="0 0 13.8 13.8"><circle cx="6.9" cy="6.9" r="5.5" fill="#63c763" stroke="#1e1e1e" stroke-opacity=".75" stroke-width="1"/></svg>
<svg class="a" style="left:456.6px;top:623.7px;" width="13.8" height="13.8" viewBox="0 0 13.8 13.8"><circle cx="6.9" cy="6.9" r="5.5" fill="#a1a1a1" stroke="#1e1e1e" stroke-opacity=".75" stroke-width="1"/></svg>
<svg class="a" style="left:456.6px;top:649.8px;" width="13.8" height="13.8" viewBox="0 0 13.8 13.8"><circle cx="6.9" cy="6.9" r="5.5" fill="#63c763" stroke="#1e1e1e" stroke-opacity=".75" stroke-width="1"/></svg>
<svg class="a" style="left:456.6px;top:675.9px;" width="13.8" height="13.8" viewBox="0 0 13.8 13.8"><circle cx="6.9" cy="6.9" r="5.5" fill="#63c763" stroke="#1e1e1e" stroke-opacity=".75" stroke-width="1"/></svg>
<div class="a node" style="left:706.2px;top:577.8px;width:166px;height:105.1px;box-shadow:0 0 0 1.2px #e8973a,0 3px 9px 1px rgba(0,0,0,.55);border-radius:8px"><div class="a nhdr" style="left:0px;top:0px;width:166px;height:23.8px;border-radius:8px 8px 0 0"></div></div>
<div class="t" style="left:731.40px;top:582.17px;font-size:13.4px;line-height:19.4px;letter-spacing:-0.596px;color:#0c0c0c;">Material Output</div>
<svg class="a" style="left:712px;top:585.9px;" width="12" height="11.4" viewBox="0 0 12 11.4"><path d="M0 0H12L6.0 11.4z" fill="#cd5a14" fill-opacity="1"/></svg>
<div class="t" style="left:725.30px;top:605.17px;font-size:13.4px;line-height:19.4px;letter-spacing:-0.721px;color:#0c0c0c;">Surface</div>
<div class="t" style="left:725.30px;top:631.77px;font-size:13.4px;line-height:19.4px;letter-spacing:-0.973px;color:#0c0c0c;">Volume</div>
<div class="t" style="left:725.30px;top:657.77px;font-size:13.4px;line-height:19.4px;letter-spacing:-0.635px;color:#0c0c0c;">Displacement</div>
<svg class="a" style="left:698.7px;top:606px;" width="13.8" height="13.8" viewBox="0 0 13.8 13.8"><circle cx="6.9" cy="6.9" r="5.5" fill="#63c763" stroke="#1e1e1e" stroke-opacity=".75" stroke-width="1"/></svg>
<svg class="a" style="left:698.7px;top:632.3px;" width="13.8" height="13.8" viewBox="0 0 13.8 13.8"><circle cx="6.9" cy="6.9" r="5.5" fill="#63c763" stroke="#1e1e1e" stroke-opacity=".75" stroke-width="1"/></svg>
<svg class="a" style="left:698.7px;top:658.4px;" width="13.8" height="13.8" viewBox="0 0 13.8 13.8"><circle cx="6.9" cy="6.9" r="5.5" fill="#a1a1a1" stroke="#1e1e1e" stroke-opacity=".75" stroke-width="1"/></svg>
<svg class="a" style="left:180px;top:700px;" width="130" height="30" viewBox="180 700 130 30"><path d="M194 717.200L253.600 711.200L256 713.200L293.300 713" fill="none" stroke="#ecf600" stroke-width="5.400" stroke-linecap="round" stroke-linejoin="round"/></svg>
<div class="a " style="left:909px;top:477px;width:180px;height:393px;background:#727272"></div>
<div class="a " style="left:909px;top:477px;width:1px;height:393px;background:#5e5e5e"></div>
<svg class="a" style="left:922px;top:485.8px;" width="8.2" height="8" viewBox="0 0 8.2 8"><path d="M0 0H8.2L4.1 8z" fill="#262626" fill-opacity="1"/></svg>
<div class="t" style="left:934.60px;top:480.64px;font-size:12px;line-height:18px;letter-spacing:-0.705px;color:#000;">Node</div>
<svg class="a" style="left:1068px;top:488px;" width="12" height="7" viewBox="0 0 12 7"><rect x="0" y="0.0" width="1.3" height="1.3" fill="#4c4c4c"/><rect x="1" y="1.0" width="1.4" height="1.4" fill="#a4a4a4"/><rect x="0" y="3.5" width="1.3" height="1.3" fill="#4c4c4c"/><rect x="1" y="4.5" width="1.4" height="1.4" fill="#a4a4a4"/><rect x="3" y="0.0" width="1.3" height="1.3" fill="#4c4c4c"/><rect x="4" y="1.0" width="1.4" height="1.4" fill="#a4a4a4"/><rect x="3" y="3.5" width="1.3" height="1.3" fill="#4c4c4c"/><rect x="4" y="4.5" width="1.4" height="1.4" fill="#a4a4a4"/><rect x="6" y="0.0" width="1.3" height="1.3" fill="#4c4c4c"/><rect x="7" y="1.0" width="1.4" height="1.4" fill="#a4a4a4"/><rect x="6" y="3.5" width="1.3" height="1.3" fill="#4c4c4c"/><rect x="7" y="4.5" width="1.4" height="1.4" fill="#a4a4a4"/><rect x="9" y="0.0" width="1.3" height="1.3" fill="#4c4c4c"/><rect x="10" y="1.0" width="1.4" height="1.4" fill="#a4a4a4"/><rect x="9" y="3.5" width="1.3" height="1.3" fill="#4c4c4c"/><rect x="10" y="4.5" width="1.4" height="1.4" fill="#a4a4a4"/></svg>
<div class="t" style="left:925.50px;top:511.62px;font-size:11px;line-height:17px;letter-spacing:-0.752px;color:#000;">Name:</div>
<div class="a txt" style="left:976px;top:510px;width:105px;height:19px;border-radius:5px"></div>
<svg class="a" style="left:981px;top:512px;" width="15" height="15" viewBox="0 0 16 16"><rect x="1.500" y="1.500" width="13" height="13" rx="1.500" fill="#f4f4f4" stroke="#222" stroke-width=".8"/><rect x="3.500" y="3.500" width="9" height="2" fill="#777"/><rect x="4.500" y="6.500" width="4" height="4" fill="#555"/><rect x="8.500" y="9" width="3.500" height="3.500" fill="#777"/></svg>
<div class="t" style="left:1000.40px;top:511.92px;font-size:11px;line-height:17px;letter-spacing:-0.441px;color:#000;">Material Out...</div>
<div class="t" style="left:925.50px;top:537.02px;font-size:11px;line-height:17px;letter-spacing:-0.614px;color:#000;">Label:</div>
<div class="a txt" style="left:976px;top:535px;width:105px;height:19px;border-radius:5px"></div>
<svg class="a" style="left:981px;top:537px;" width="15" height="15" viewBox="0 0 16 16"><rect x="1.500" y="1.500" width="13" height="13" rx="1.500" fill="#f4f4f4" stroke="#222" stroke-width=".8"/><rect x="3.500" y="3.500" width="9" height="2" fill="#777"/><rect x="4.500" y="6.500" width="4" height="4" fill="#555"/><rect x="8.500" y="9" width="3.500" height="3.500" fill="#777"/></svg>
<div class="a " style="left:914px;top:561px;width:170px;height:1px;background:#414141"></div>
<div class="a " style="left:914px;top:562px;width:170px;height:1px;background:#7e7e7e"></div>
<svg class="a" style="left:922.3px;top:569.3px;" width="7.6" height="8.4" viewBox="0 0 7.6 8.4"><path d="M0 0V8.4L7.6 4.2z" fill="#262626"/></svg>
<div class="a opt" style="left:934px;top:566.8px;width:14px;height:14px;"></div>
<div class="t" style="left:954.60px;top:564.94px;font-size:12px;line-height:18px;letter-spacing:-0.466px;color:#000;">Color</div>
<svg class="a" style="left:1068px;top:572.3px;" width="12" height="7" viewBox="0 0 12 7"><rect x="0" y="0.0" width="1.3" height="1.3" fill="#4c4c4c"/><rect x="1" y="1.0" width="1.4" height="1.4" fill="#a4a4a4"/><rect x="0" y="3.5" width="1.3" height="1.3" fill="#4c4c4c"/><rect x="1" y="4.5" width="1.4" height="1.4" fill="#a4a4a4"/><rect x="3" y="0.0" width="1.3" height="1.3" fill="#4c4c4c"/><rect x="4" y="1.0" width="1.4" height="1.4" fill="#a4a4a4"/><rect x="3" y="3.5" width="1.3" height="1.3" fill="#4c4c4c"/><rect x="4" y="4.5" width="1.4" height="1.4" fill="#a4a4a4"/><rect x="6" y="0.0" width="1.3" height="1.3" fill="#4c4c4c"/><rect x="7" y="1.0" width="1.4" height="1.4" fill="#a4a4a4"/><rect x="6" y="3.5" width="1.3" height="1.3" fill="#4c4c4c"/><rect x="7" y="4.5" width="1.4" height="1.4" fill="#a4a4a4"/><rect x="9" y="0.0" width="1.3" height="1.3" fill="#4c4c4c"/><rect x="10" y="1.0" width="1.4" height="1.4" fill="#a4a4a4"/><rect x="9" y="3.5" width="1.3" height="1.3" fill="#4c4c4c"/><rect x="10" y="4.5" width="1.4" height="1.4" fill="#a4a4a4"/></svg>
<div class="a " style="left:914px;top:585px;width:170px;height:1px;background:#414141"></div>
<div class="a " style="left:914px;top:586px;width:170px;height:1px;background:#7e7e7e"></div>
<svg class="a" style="left:922px;top:594.5px;" width="8.2" height="8" viewBox="0 0 8.2 8"><path d="M0 0H8.2L4.1 8z" fill="#262626" fill-opacity="1"/></svg>
<div class="t" style="left:934.60px;top:589.34px;font-size:12px;line-height:18px;letter-spacing:-0.525px;color:#000;">Properties</div>
<svg class="a" style="left:1068px;top:596.7px;" width="12" height="7" viewBox="0 0 12 7"><rect x="0" y="0.0" width="1.3" height="1.3" fill="#4c4c4c"/><rect x="1" y="1.0" width="1.4" height="1.4" fill="#a4a4a4"/><rect x="0" y="3.5" width="1.3" height="1.3" fill="#4c4c4c"/><rect x="1" y="4.5" width="1.4" height="1.4" fill="#a4a4a4"/><rect x="3" y="0.0" width="1.3" height="1.3" fill="#4c4c4c"/><rect x="4" y="1.0" width="1.4" height="1.4" fill="#a4a4a4"/><rect x="3" y="3.5" width="1.3" height="1.3" fill="#4c4c4c"/><rect x="4" y="4.5" width="1.4" height="1.4" fill="#a4a4a4"/><rect x="6" y="0.0" width="1.3" height="1.3" fill="#4c4c4c"/><rect x="7" y="1.0" width="1.4" height="1.4" fill="#a4a4a4"/><rect x="6" y="3.5" width="1.3" height="1.3" fill="#4c4c4c"/><rect x="7" y="4.5" width="1.4" height="1.4" fill="#a4a4a4"/><rect x="9" y="0.0" width="1.3" height="1.3" fill="#4c4c4c"/><rect x="10" y="1.0" width="1.4" height="1.4" fill="#a4a4a4"/><rect x="9" y="3.5" width="1.3" height="1.3" fill="#4c4c4c"/><rect x="10" y="4.5" width="1.4" height="1.4" fill="#a4a4a4"/></svg>
<div class="t" style="left:925.20px;top:631.82px;font-size:11px;line-height:17px;letter-spacing:-0.732px;color:#000;">Inputs:</div>
<div class="t" style="left:925.20px;top:657.42px;font-size:11px;line-height:17px;letter-spacing:-0.502px;color:#000;">Volume</div>
<div class="t" style="left:925.20px;top:682.22px;font-size:11px;line-height:17px;letter-spacing:-0.585px;color:#000;">Displacement</div>
<div class="a " style="left:914px;top:706px;width:170px;height:1px;background:#414141"></div>
<div class="a " style="left:914px;top:707px;width:170px;height:1px;background:#7e7e7e"></div>
<svg class="a" style="left:922px;top:715.1px;" width="8.2" height="8" viewBox="0 0 8.2 8"><path d="M0 0H8.2L4.1 8z" fill="#262626" fill-opacity="1"/></svg>
<div class="a opt" style="left:934px;top:711.8px;width:14px;height:14px;"><svg class="a" style="left:-0.5px;top:-3.2px" width="16.0" height="16.0" viewBox="0 0 16 16"><path d="M3.600 8.200L6.600 11.800L13.200 2.600" fill="none" stroke="#fff" stroke-width="1.750" stroke-linecap="round" stroke-linejoin="round"/></svg></div>
<div class="t" style="left:954.60px;top:709.94px;font-size:12px;line-height:18px;letter-spacing:-0.463px;color:#000;">Grease Pencil</div>
<svg class="a" style="left:1068px;top:717.3px;" width="12" height="7" viewBox="0 0 12 7"><rect x="0" y="0.0" width="1.3" height="1.3" fill="#4c4c4c"/><rect x="1" y="1.0" width="1.4" height="1.4" fill="#a4a4a4"/><rect x="0" y="3.5" width="1.3" height="1.3" fill="#4c4c4c"/><rect x="1" y="4.5" width="1.4" height="1.4" fill="#a4a4a4"/><rect x="3" y="0.0" width="1.3" height="1.3" fill="#4c4c4c"/><rect x="4" y="1.0" width="1.4" height="1.4" fill="#a4a4a4"/><rect x="3" y="3.5" width="1.3" height="1.3" fill="#4c4c4c"/><rect x="4" y="4.5" width="1.4" height="1.4" fill="#a4a4a4"/><rect x="6" y="0.0" width="1.3" height="1.3" fill="#4c4c4c"/><rect x="7" y="1.0" width="1.4" height="1.4" fill="#a4a4a4"/><rect x="6" y="3.5" width="1.3" height="1.3" fill="#4c4c4c"/><rect x="7" y="4.5" width="1.4" height="1.4" fill="#a4a4a4"/><rect x="9" y="0.0" width="1.3" height="1.3" fill="#4c4c4c"/><rect x="10" y="1.0" width="1.4" height="1.4" fill="#a4a4a4"/><rect x="9" y="3.5" width="1.3" height="1.3" fill="#4c4c4c"/><rect x="10" y="4.5" width="1.4" height="1.4" fill="#a4a4a4"/></svg>
<div class="a menu" style="left:917px;top:739px;width:32px;height:20px;border-radius:5px 0 0 5px"></div>
<svg class="a" style="left:920px;top:741.5px;" width="15" height="15" viewBox="0 0 16 16"><path d="M2 14L3 10.500L11.500 2L14 4.500L5.500 13z" fill="#d8c23a" stroke="#333" stroke-width=".7" stroke-linejoin="round"/><path d="M2 14L3 10.500L5.500 13z" fill="#f4dcc0" stroke="#333" stroke-width=".5"/><path d="M10.300 3.200L12.800 5.700L14 4.500L11.500 2z" fill="#d33"/><path d="M4 11.500L11 4.500" stroke="#4a8a2a" stroke-width="1"/></svg>
<svg class="a" style="left:939.8px;top:743.45px;" width="5.4" height="11.7" viewBox="0 0 6 13"><path d="M0 5.200L3 0L6 5.200z M0 7.800L3 13L6 7.800z" fill="#b8b8b8"/></svg>
<div class="a tool" style="left:948px;top:739px;width:133px;height:20px;border-radius:0 5px 5px 0"></div>
<svg class="a" style="left:952.5px;top:741.3px;" width="15" height="15" viewBox="0 0 16 16"><path d="M6.400 1.800h3.200v4.600h4.600v3.200h-4.600v4.600h-3.200v-4.600h-4.600v-3.200h4.600z" fill="#fff" stroke="#151515" stroke-width="1" stroke-linejoin="round"/></svg>
<div class="t" style="left:1011.36px;top:741.72px;font-size:11px;line-height:17px;letter-spacing:-0.640px;color:#000;">New</div>
<svg class="a" style="left:1090px;top:27px;" width="804" height="519" viewBox="1090 27 804 519"><defs><linearGradient id="flo2" x1="1900" y1="100" x2="1090" y2="546" gradientUnits="userSpaceOnUse"><stop offset="0" stop-color="#68848f"/><stop offset=".45" stop-color="#64848c"/><stop offset="1" stop-color="#5c8886"/></linearGradient><filter id="b3" x="-20%" y="-20%" width="140%" height="140%"><feGaussianBlur stdDeviation="2.2"/></filter><filter id="b9" x="-30%" y="-30%" width="160%" height="160%"><feGaussianBlur stdDeviation="9"/></filter><filter id="b30" x="-50%" y="-50%" width="200%" height="200%"><feGaussianBlur stdDeviation="34"/></filter><filter id="b8" x="-100%" y="-30%" width="300%" height="160%"><feGaussianBlur stdDeviation="7"/></filter><filter id="nz2" x="0" y="0" width="100%" height="100%"><feTurbulence type="fractalNoise" baseFrequency="0.8" numOctaves="2" seed="5"/><feColorMatrix values="0 0 0 0 .33  0 0 0 0 .82  0 0 0 0 .53  2.2 0 0 0 -.9"/></filter><filter id="nz3" x="0" y="0" width="100%" height="100%"><feTurbulence type="fractalNoise" baseFrequency="0.9" numOctaves="2" seed="9"/><feColorMatrix values="0 0 0 0 .3  0 0 0 0 .38  0 0 0 0 .48  1.8 0 0 0 -.8"/></filter><filter id="b57" x="-50%" y="-50%" width="200%" height="200%"><feGaussianBlur stdDeviation="26"/></filter><mask id="gm2"><rect x="1090" y="27" width="804" height="519" fill="#141414"/><g filter="url(#b57)" transform="translate(1403.3,108.8) scale(1.887) translate(-492.5,-124.5)"><path d="M392 195 L700 356 L740 380 L735 470 L430 470 L350 400 L330 300z" fill="#fff"/></g></mask><clipPath id="fc2"><path d="M1403.3 108.8 L1894 280.5 V546 H1090 V200.7z"/></clipPath><linearGradient id="stk" x1="0" y1="0" x2="0" y2="1"><stop offset="0" stop-color="#50f070" stop-opacity="0"/><stop offset="1" stop-color="#50f070" stop-opacity=".75"/></linearGradient></defs><rect x="1090" y="27" width="804" height="519" fill="#3a3a3a"/><path d="M1403.3 108.8 L1894 280.5 V546 H1090 V200.7z" fill="url(#flo2)"/><g clip-path="url(#fc2)"><rect x="1090" y="27" width="804" height="519" filter="url(#nz3)" opacity=".28"/><g filter="url(#b57)" transform="translate(1403.3,108.8) scale(1.887) translate(-492.5,-124.5)" opacity=".17"><path d="M392 195 L700 356 L740 380 L735 470 L430 470 L350 400 L330 300z" fill="#50d890"/></g><rect x="1090" y="27" width="804" height="519" filter="url(#nz2)" mask="url(#gm2)"/></g><defs><linearGradient id="hm" x1="0" x2="1"><stop offset="0" stop-color="#fff"/><stop offset=".55" stop-color="#999"/><stop offset="1" stop-color="#000"/></linearGradient><linearGradient id="hm2" x1="1" x2="0"><stop offset="0" stop-color="#fff"/><stop offset=".55" stop-color="#999"/><stop offset="1" stop-color="#000"/></linearGradient><mask id="m1" maskContentUnits="objectBoundingBox"><rect width="1" height="1" fill="url(#hm)"/></mask><mask id="m2" maskContentUnits="objectBoundingBox"><rect width="1" height="1" fill="url(#hm2)"/></mask><linearGradient id="stk2" x1="1" y1="0" x2="0" y2="0"><stop offset="0" stop-color="#58e888" stop-opacity=".5"/><stop offset="1" stop-color="#58e888" stop-opacity="0"/></linearGradient><filter id="b1" x="-20%" y="-20%" width="140%" height="140%"><feGaussianBlur stdDeviation="1"/></filter><filter id="b5" x="-20%" y="-20%" width="140%" height="140%"><feGaussianBlur stdDeviation="5"/></filter><filter id="b18" x="-30%" y="-30%" width="160%" height="160%"><feGaussianBlur stdDeviation="16"/></filter></defs><rect x="1204.500" y="92" width="34" height="130" fill="url(#stk)" mask="url(#m1)"/><rect x="1204.500" y="222" width="30" height="324" fill="#60e890" opacity=".07"/><g filter="url(#b5)"><rect x="1080" y="192" width="135" height="38" fill="url(#stk2)" opacity=".4"/></g><rect x="1792" y="390" width="42" height="100" fill="url(#stk)" mask="url(#m2)" opacity=".38"/><g filter="url(#b18)" opacity=".55"><path d="M400.6 165.7 L716 316.2 Q720.5 319 720 327 Q717 348 700.4 355.8 L394 191.5 A14.3 14.3 0 0 1 400.6 165.7z" transform="translate(1403.3,108.8) scale(1.887) translate(-492.5,-124.5)" fill="#56e082" stroke="#56e082" stroke-width="16"/></g><g filter="url(#b5)" opacity=".8"><path d="M400.6 165.7 L716 316.2 Q720.5 319 720 327 Q717 348 700.4 355.8 L394 191.5 A14.3 14.3 0 0 1 400.6 165.7z" transform="translate(1403.3,108.8) scale(1.887) translate(-492.5,-124.5)" fill="#48f46e" stroke="#48f46e" stroke-width="4"/></g><g filter="url(#b1)"><path d="M400.6 165.7 L716 316.2 Q720.5 319 720 327 Q717 348 700.4 355.8 L394 191.5 A14.3 14.3 0 0 1 400.6 165.7z" transform="translate(1403.3,108.8) scale(1.887) translate(-492.5,-124.5)" fill="#50f878" stroke="#50f878" stroke-width="4"/></g><clipPath id="cyc"><path d="M400.6 165.7 L716 316.2 Q720.5 319 720 327 Q717 348 700.4 355.8 L394 191.5 A14.3 14.3 0 0 1 400.6 165.7z" transform="translate(1403.3,108.8) scale(1.887) translate(-492.5,-124.5)"/></clipPath><g clip-path="url(#cyc)"><path d="M400.6 165.7 L716 316.2 Q720.5 319 720 327 Q717 348 700.4 355.8 L394 191.5 A14.3 14.3 0 0 1 400.6 165.7z" transform="translate(1403.3,108.8) scale(1.887) translate(-492.5,-124.5)" fill="#7dfcb9"/><g filter="url(#b3)"><path d="M400.6 165.7 L716 316.2 Q720.5 319 720 327 Q717 348 700.4 355.8 L394 191.5 A14.3 14.3 0 0 1 400.6 165.7z" transform="translate(1403.3,108.8) scale(1.887) translate(-492.5,-124.5)" fill="none" stroke="#52f87c" stroke-width="2.5"/></g></g><path d="M1467.500 261L1518 311.500M1518 261L1467.500 311.500" stroke="#fff" stroke-width="1" fill="none"/></svg>
<div class="t" style="left:1120.00px;top:504.02px;font-size:11px;line-height:17px;letter-spacing:-0.708px;color:#fff;">Scene</div>
<div class="a " style="left:1878px;top:27px;width:16px;height:502px;background:#3b3b3b"></div>
<div class="a " style="left:1090px;top:529px;width:788px;height:17px;background:#3b3b3b"></div>
<div class="a sb" style="left:1879px;top:32px;width:12px;height:492px;border-radius:6px;border-color:#303030;background:linear-gradient(90deg,#959595,#7e7e7e)"></div>
<div class="a sbh" style="left:1094px;top:530px;width:779px;height:12px;border-radius:6px;border-color:#303030;background:linear-gradient(#959595,#7a7a7a)"></div>
<div class="a " style="left:1090px;top:49px;width:6px;height:14px;background:rgba(40,40,40,.85);border-radius:0 4px 4px 0"></div>
<div class="t" style="left:1090.50px;top:48.28px;font-size:9px;line-height:15px;letter-spacing:0.000px;color:#aaa;">+</div>
<div class="a " style="left:1880px;top:49px;width:14px;height:14px;background:rgba(110,110,110,.75);border-radius:4px 0 0 4px"></div>
<div class="t" style="left:1883.00px;top:47.80px;font-size:10px;line-height:16px;letter-spacing:0.000px;color:#ccc;font-weight:bold;">+</div>
<svg class="a" style="left:1090px;top:27px;" width="804" height="519" viewBox="1090 27 804 519"><path d="M1459 73.9C1481.8 73.9 1481.8 242.6 1504.6 242.6" fill="none" stroke="#1c1c1c" stroke-width="3.6"/><path d="M1459 73.9C1481.8 73.9 1481.8 242.6 1504.6 242.6" fill="none" stroke="#868686" stroke-width="1.6"/><path d="M1609 56C1670.65 56 1670.65 92.9 1732.3 92.9" fill="none" stroke="#1c1c1c" stroke-width="3.6"/><path d="M1609 56C1670.65 56 1670.65 92.9 1732.3 92.9" fill="none" stroke="#868686" stroke-width="1.6"/><path d="M1609 56C1671.25 56 1671.25 178.5 1733.5 178.5" fill="none" stroke="#1c1c1c" stroke-width="3.6"/><path d="M1609 56C1671.25 56 1671.25 178.5 1733.5 178.5" fill="none" stroke="#f6f6f6" stroke-width="1.6"/></svg>
<div class="a " style="left:1354.6px;top:46.9px;width:104.6px;height:167.8px;background:rgba(106,106,106,.83);box-shadow:0 2px 7px 1px rgba(0,0,0,.5);border-radius:6.5px"><div class="a " style="left:0px;top:0px;width:104.6px;height:15.8px;border-radius:6.5px 6.5px 0 0;background:rgba(60,60,62,.4)"></div></div>
<svg class="a" style="left:1358.7px;top:53.6px;" width="7.3" height="6.8" viewBox="0 0 7.3 6.8"><path d="M0 0H7.3L3.65 6.8z" fill="#3a3a3a" fill-opacity="0.9"/></svg>
<div class="t" style="left:1370.20px;top:49.78px;font-size:8.8px;line-height:14.8px;letter-spacing:-0.404px;color:#0a0a0a;">Render Layers</div>
<svg class="a" style="left:1440.9px;top:51.3px;" width="10.6" height="10.6" viewBox="0 0 16 16"><defs><radialGradient id="gnp" cx=".36" cy=".3" r=".8"><stop offset="0" stop-color="#fff"/><stop offset=".45" stop-color="#d8d8d8"/><stop offset="1" stop-color="#5a5a5a"/></radialGradient></defs><circle cx="8" cy="8" r="6.900" fill="url(#gnp)" stroke="#2a2a2a" stroke-width="1"/><path d="M8 8L14.900 8A6.900 6.900 0 0 1 8 14.900z" fill="#b8503c" opacity=".8"/><path d="M8 8L1.100 8A6.900 6.900 0 0 1 8 1.100z" fill="#b8503c" opacity=".25"/><path d="M8 8L8 1.100A6.900 6.900 0 0 1 14.900 8z" fill="#888" opacity=".3"/></svg>
<div class="t" style="left:1417.70px;top:67.78px;font-size:8.8px;line-height:14.8px;letter-spacing:-0.632px;color:#0a0a0a;">Image</div>
<div class="t" style="left:1418.60px;top:84.58px;font-size:8.8px;line-height:14.8px;letter-spacing:-0.304px;color:#0a0a0a;">Alpha</div>
<div class="t" style="left:1436.30px;top:100.68px;font-size:8.8px;line-height:14.8px;letter-spacing:-0.229px;color:#0a0a0a;">Z</div>
<svg class="a" style="left:1453.7px;top:68.6px;" width="10.6" height="10.6" viewBox="0 0 10.6 10.6"><circle cx="5.3" cy="5.3" r="3.9" fill="#c7c729" stroke="#1e1e1e" stroke-opacity=".75" stroke-width="1"/></svg>
<svg class="a" style="left:1453.7px;top:85.5px;" width="10.6" height="10.6" viewBox="0 0 10.6 10.6"><circle cx="5.3" cy="5.3" r="3.9" fill="#a1a1a1" stroke="#1e1e1e" stroke-opacity=".75" stroke-width="1"/></svg>
<svg class="a" style="left:1453.7px;top:101.7px;" width="10.6" height="10.6" viewBox="0 0 10.6 10.6"><circle cx="5.3" cy="5.3" r="3.9" fill="#a1a1a1" stroke="#1e1e1e" stroke-opacity=".75" stroke-width="1"/></svg>
<svg class="a" style="left:1355px;top:115px;" width="100" height="60" viewBox="1355 115 100 60"><rect x="1361.4" y="119.100" width="90.400" height="50.300" fill="#3a3a3a" stroke="#222" stroke-width="1"/><clipPath id="pvc"><rect x="1361.900" y="119.600" width="89.400" height="49.300"/></clipPath><g clip-path="url(#pvc)"><path d="M1398.700 129.600L1452 147.400V170H1361V140.400z" fill="#66868e"/><path d="M1375 150L1400 140L1440 168L1380 172z" fill="#62b894" opacity=".45" filter="url(#b3)"/><path d="M1386 137.600L1431 160.600" stroke="#78fcb4" stroke-width="5.600" stroke-linecap="round"/></g></svg>
<div class="a menu" style="left:1361.4px;top:178.3px;width:23.6px;height:14.5px;border-radius:4px 0 0 4px"></div>
<svg class="a" style="left:1364px;top:180px;" width="11.5" height="11.5" viewBox="0 0 16 16"><defs><radialGradient id="gs" cx=".4" cy=".35" r=".75"><stop offset="0" stop-color="#fff"/><stop offset=".6" stop-color="#d0d0d0"/><stop offset="1" stop-color="#6a6a6a"/></radialGradient><linearGradient id="gc" x1="0" x2="1"><stop offset="0" stop-color="#cfe2fb"/><stop offset=".45" stop-color="#5d8fdc"/><stop offset="1" stop-color="#1f4a9a"/></linearGradient><radialGradient id="gl" cx=".5" cy=".5" r=".5"><stop offset="0" stop-color="#fff"/><stop offset=".45" stop-color="#fff"/><stop offset=".6" stop-color="#d9cf3a"/><stop offset="1" stop-color="#b0a820" stop-opacity=".2"/></radialGradient></defs><path d="M8.800 3.200C8.800 1.500 14.200 1.500 14.200 3.200V10.300C14.200 12 8.800 12 8.800 10.300z" fill="url(#gc)" stroke="#15306a" stroke-width=".9"/><ellipse cx="11.500" cy="3.300" rx="2.300" ry=".9" fill="#e6f0ff" opacity=".8"/><circle cx="6.200" cy="11" r="3.700" fill="url(#gs)" stroke="#1c1c1c" stroke-width="1"/><circle cx="3.300" cy="3.300" r="2.700" fill="url(#gl)"/></svg>
<svg class="a" style="left:1378.14px;top:180.92px;" width="4.32" height="9.36" viewBox="0 0 6 13"><path d="M0 5.200L3 0L6 5.200z M0 7.800L3 13L6 7.800z" fill="#b8b8b8"/></svg>
<div class="a txt" style="left:1384.4px;top:178.3px;width:34px;height:14.5px;border-radius:0"></div>
<div class="t" style="left:1389.50px;top:178.88px;font-size:8.8px;line-height:14.8px;letter-spacing:-0.706px;color:#0a0a0a;">Scene</div>
<div class="a txt" style="left:1417.7px;top:178.3px;width:18.4px;height:14.5px;border-radius:0;background:linear-gradient(#8c8c8c,#9d9d9d)"></div>
<div class="t" style="left:1423.82px;top:178.88px;font-size:8.8px;line-height:14.8px;letter-spacing:-0.448px;color:#4c4c4c;">2</div>
<div class="a tool" style="left:1435.4px;top:178.3px;width:15.4px;height:14.5px;border-radius:0 4px 4px 0"></div>
<svg class="a" style="left:1437.3px;top:179.8px;" width="11.5" height="11.5" viewBox="0 0 16 16"><g transform="rotate(45 8 8)"><path d="M6.500 .800h3v5.700h5.700v3h-5.700v5.700h-3v-5.700h-5.700v-3h5.700z" fill="#fff" stroke="#151515" stroke-width="1" stroke-linejoin="round"/></g></svg>
<div class="a menu" style="left:1361.4px;top:196.6px;width:74.6px;height:14px;border-radius:4px 0 0 4px"></div>
<div class="t" style="left:1366.40px;top:197.18px;font-size:8.8px;line-height:14.8px;letter-spacing:-0.306px;color:#fff;">RenderLayer</div>
<svg class="a" style="left:1428.98px;top:198.79px;" width="4.44" height="9.62" viewBox="0 0 6 13"><path d="M0 5.200L3 0L6 5.200z M0 7.800L3 13L6 7.800z" fill="#c8c8c8"/></svg>
<div class="a tool" style="left:1435.4px;top:196.6px;width:15.4px;height:14px;border-radius:0 4px 4px 0"></div>
<svg class="a" style="left:1437.2px;top:198px;" width="11.5" height="11.5" viewBox="0 0 16 16"><rect x="1.300" y="4.300" width="13.400" height="9.700" rx="1.200" fill="#b4b4b4" stroke="#1c1c1c" stroke-width="1"/><rect x="3.800" y="2.300" width="5" height="2.500" fill="#9a9a9a" stroke="#1c1c1c" stroke-width=".9"/><rect x="1.800" y="6.200" width="12.400" height="1.500" fill="#8a8a8a"/><circle cx="9.200" cy="9.300" r="3.500" fill="#3c3c3c" stroke="#1c1c1c" stroke-width=".9"/><circle cx="9.200" cy="9.300" r="2" fill="#7a3040"/><circle cx="8.500" cy="8.600" r=".8" fill="#d8a0a8"/><rect x="2.600" y="5.100" width="2" height="1.100" fill="#d03030"/><path d="M12.800 -.200L13.700 2.300L16.200 3.200L13.700 4.100L12.800 6.600L11.900 4.100L9.400 3.200L11.900 2.300z" fill="#fff08a" stroke="#a88a10" stroke-width=".4"/></svg>
<div class="a " style="left:1505px;top:29.6px;width:104px;height:224.3px;background:rgba(106,106,106,.83);box-shadow:0 2px 7px 1px rgba(0,0,0,.5);border-radius:6.5px"><div class="a " style="left:0px;top:0px;width:104px;height:14.4px;border-radius:6.5px 6.5px 0 0;background:rgba(60,60,62,.4)"></div></div>
<svg class="a" style="left:1509px;top:35.4px;" width="7.2" height="6.4" viewBox="0 0 7.2 6.4"><path d="M0 0H7.2L3.6 6.4z" fill="#3a3a3a" fill-opacity="0.9"/></svg>
<div class="t" style="left:1520.30px;top:31.68px;font-size:8.8px;line-height:14.8px;letter-spacing:-0.559px;color:#0a0a0a;">Glare</div>
<div class="t" style="left:1567.70px;top:49.58px;font-size:8.8px;line-height:14.8px;letter-spacing:-0.612px;color:#0a0a0a;">Image</div>
<svg class="a" style="left:1603.7px;top:50.7px;" width="10.6" height="10.6" viewBox="0 0 10.6 10.6"><circle cx="5.3" cy="5.3" r="3.9" fill="#c7c729" stroke="#1e1e1e" stroke-opacity=".75" stroke-width="1"/></svg>
<div class="a menu" style="left:1511.4px;top:68.3px;width:89.4px;height:14.2px;border-radius:4px"></div>
<div class="t" style="left:1516.30px;top:68.68px;font-size:8.8px;line-height:14.8px;letter-spacing:-0.421px;color:#fff;">Streaks</div>
<svg class="a" style="left:1593.98px;top:70.59px;" width="4.44" height="9.62" viewBox="0 0 6 13"><path d="M0 5.200L3 0L6 5.200z M0 7.800L3 13L6 7.800z" fill="#c8c8c8"/></svg>
<div class="a menu" style="left:1511.4px;top:87.4px;width:89.4px;height:14.2px;border-radius:4px"></div>
<div class="t" style="left:1516.30px;top:87.48px;font-size:8.8px;line-height:14.8px;letter-spacing:-0.581px;color:#fff;">Medium</div>
<svg class="a" style="left:1593.98px;top:89.69px;" width="4.44" height="9.62" viewBox="0 0 6 13"><path d="M0 5.200L3 0L6 5.200z M0 7.800L3 13L6 7.800z" fill="#c8c8c8"/></svg>
<div class="a num" style="left:1511.4px;top:105.7px;width:89.4px;height:14.2px;border-radius:7.1px;overflow:hidden;border-color:#2e2e2e"></div>
<svg class="a" style="left:1515.4px;top:110.175px;" width="3" height="5.25" viewBox="0 0 4 7"><path d="M4 0V7L0 3.500z" fill="#666"/></svg>
<svg class="a" style="left:1593.8px;top:110.175px;" width="3" height="5.25" viewBox="0 0 4 7"><path d="M0 0V7L4 3.500z" fill="#666"/></svg>
<div class="t" style="left:1522.60px;top:105.58px;font-size:8.8px;line-height:14.8px;letter-spacing:-0.571px;color:#0a0a0a;">Iterations:</div>
<div class="t" style="left:1582.25px;top:105.58px;font-size:8.8px;line-height:14.8px;letter-spacing:-0.448px;color:#0a0a0a;">3</div>
<div class="a num" style="left:1511.4px;top:124.6px;width:89.4px;height:14.2px;border-radius:7.1px;overflow:hidden;border-color:#2e2e2e"><div class="a" style="left:0;top:0;width:26.6px;height:100%;background:linear-gradient(#787878,#8a8a8a)"></div></div>
<div class="t" style="left:1521.20px;top:124.78px;font-size:8.8px;line-height:14.8px;letter-spacing:-0.512px;color:#0a0a0a;">Color Mod: 0.250</div>
<div class="a num" style="left:1511.4px;top:143.6px;width:89.4px;height:14px;border-radius:7px;overflow:hidden;border-color:#2e2e2e"></div>
<svg class="a" style="left:1515.4px;top:147.975px;" width="3" height="5.25" viewBox="0 0 4 7"><path d="M4 0V7L0 3.500z" fill="#666"/></svg>
<svg class="a" style="left:1593.8px;top:147.975px;" width="3" height="5.25" viewBox="0 0 4 7"><path d="M0 0V7L4 3.500z" fill="#666"/></svg>
<div class="t" style="left:1521.70px;top:143.48px;font-size:8.8px;line-height:14.8px;letter-spacing:-0.653px;color:#0a0a0a;">Mix:</div>
<div class="t" style="left:1566.60px;top:143.48px;font-size:8.8px;line-height:14.8px;letter-spacing:-0.699px;color:#0a0a0a;">0.000</div>
<div class="a num" style="left:1511.4px;top:161.6px;width:89.4px;height:14.2px;border-radius:7.1px;overflow:hidden;border-color:#2e2e2e"></div>
<svg class="a" style="left:1515.4px;top:166.075px;" width="3" height="5.25" viewBox="0 0 4 7"><path d="M4 0V7L0 3.500z" fill="#666"/></svg>
<svg class="a" style="left:1593.8px;top:166.075px;" width="3" height="5.25" viewBox="0 0 4 7"><path d="M0 0V7L4 3.500z" fill="#666"/></svg>
<div class="t" style="left:1522.60px;top:161.68px;font-size:8.8px;line-height:14.8px;letter-spacing:-0.620px;color:#0a0a0a;">Threshold: 0.800</div>
<div class="a num" style="left:1511.4px;top:180.4px;width:89.4px;height:14.2px;border-radius:7.1px;overflow:hidden;border-color:#2e2e2e"></div>
<svg class="a" style="left:1515.4px;top:184.875px;" width="3" height="5.25" viewBox="0 0 4 7"><path d="M4 0V7L0 3.500z" fill="#666"/></svg>
<svg class="a" style="left:1593.8px;top:184.875px;" width="3" height="5.25" viewBox="0 0 4 7"><path d="M0 0V7L4 3.500z" fill="#666"/></svg>
<div class="t" style="left:1522.60px;top:180.68px;font-size:8.8px;line-height:14.8px;letter-spacing:-0.527px;color:#0a0a0a;">Streaks:</div>
<div class="t" style="left:1581.85px;top:180.68px;font-size:8.8px;line-height:14.8px;letter-spacing:-0.448px;color:#0a0a0a;">4</div>
<div class="a num" style="left:1511.4px;top:198.8px;width:89.4px;height:14.2px;border-radius:7.1px;overflow:hidden;border-color:#2e2e2e"></div>
<svg class="a" style="left:1515.4px;top:203.275px;" width="3" height="5.25" viewBox="0 0 4 7"><path d="M4 0V7L0 3.500z" fill="#666"/></svg>
<svg class="a" style="left:1593.8px;top:203.275px;" width="3" height="5.25" viewBox="0 0 4 7"><path d="M0 0V7L4 3.500z" fill="#666"/></svg>
<div class="t" style="left:1522.60px;top:198.68px;font-size:8.8px;line-height:14.8px;letter-spacing:-0.426px;color:#0a0a0a;">Angle Offset:</div>
<div class="t" style="left:1578.30px;top:198.68px;font-size:8.8px;line-height:14.8px;letter-spacing:-0.650px;color:#0a0a0a;">0°</div>
<div class="a num" style="left:1511.4px;top:217.7px;width:89.4px;height:14px;border-radius:7px;overflow:hidden;border-color:#2e2e2e"><div class="a" style="left:0;top:0;width:55.6px;height:100%;background:linear-gradient(#787878,#8a8a8a)"></div></div>
<div class="t" style="left:1521.70px;top:217.68px;font-size:8.8px;line-height:14.8px;letter-spacing:-0.422px;color:#0a0a0a;">Fade:</div>
<div class="t" style="left:1566.60px;top:217.68px;font-size:8.8px;line-height:14.8px;letter-spacing:-0.699px;color:#0a0a0a;">0.900</div>
<div class="t" style="left:1516.60px;top:236.88px;font-size:8.8px;line-height:14.8px;letter-spacing:-0.632px;color:#0a0a0a;">Image</div>
<svg class="a" style="left:1499.3px;top:237.3px;" width="10.6" height="10.6" viewBox="0 0 10.6 10.6"><circle cx="5.3" cy="5.3" r="3.9" fill="#c7c729" stroke="#1e1e1e" stroke-opacity=".75" stroke-width="1"/></svg>
<div class="a " style="left:1732px;top:47.5px;width:105px;height:100px;background:rgba(106,106,106,.83);box-shadow:0 2px 7px 1px rgba(0,0,0,.5);border-radius:6.5px"><div class="a " style="left:0px;top:0px;width:105px;height:15.5px;border-radius:6.5px 6.5px 0 0;background:rgba(60,60,62,.4)"></div></div>
<svg class="a" style="left:1736px;top:53.8px;" width="7.3" height="6.6" viewBox="0 0 7.3 6.6"><path d="M0 0H7.3L3.65 6.6z" fill="#3a3a3a" fill-opacity="0.9"/></svg>
<div class="t" style="left:1747.30px;top:49.68px;font-size:8.8px;line-height:14.8px;letter-spacing:-0.463px;color:#0a0a0a;">Composite</div>
<svg class="a" style="left:1818.7px;top:50.8px;" width="10.6" height="10.6" viewBox="0 0 16 16"><defs><radialGradient id="gnp" cx=".36" cy=".3" r=".8"><stop offset="0" stop-color="#fff"/><stop offset=".45" stop-color="#d8d8d8"/><stop offset="1" stop-color="#5a5a5a"/></radialGradient></defs><circle cx="8" cy="8" r="6.900" fill="url(#gnp)" stroke="#2a2a2a" stroke-width="1"/><path d="M8 8L14.900 8A6.900 6.900 0 0 1 8 14.900z" fill="#b8503c" opacity=".8"/><path d="M8 8L1.100 8A6.900 6.900 0 0 1 8 1.100z" fill="#b8503c" opacity=".25"/><path d="M8 8L8 1.100A6.900 6.900 0 0 1 14.900 8z" fill="#888" opacity=".3"/></svg>
<div class="a opt" style="left:1741px;top:69.3px;width:11px;height:10.5px;"><svg class="a" style="left:-0.4px;top:-2.5px" width="12.6" height="12.0" viewBox="0 0 16 16"><path d="M3.600 8.200L6.600 11.800L13.200 2.600" fill="none" stroke="#fff" stroke-width="1.750" stroke-linecap="round" stroke-linejoin="round"/></svg></div>
<div class="t" style="left:1756.50px;top:67.48px;font-size:8.8px;line-height:14.8px;letter-spacing:-0.551px;color:#fff;">Use Alpha</div>
<div class="t" style="left:1744.70px;top:86.78px;font-size:8.8px;line-height:14.8px;letter-spacing:-0.652px;color:#0a0a0a;">Image</div>
<div class="a num" style="left:1739.2px;top:102.4px;width:88.4px;height:14px;border-radius:7px;overflow:hidden;border-color:#2e2e2e"></div>
<svg class="a" style="left:1743.2px;top:106.775px;" width="3" height="5.25" viewBox="0 0 4 7"><path d="M4 0V7L0 3.500z" fill="#666"/></svg>
<svg class="a" style="left:1820.6px;top:106.775px;" width="3" height="5.25" viewBox="0 0 4 7"><path d="M0 0V7L4 3.500z" fill="#666"/></svg>
<div class="t" style="left:1750.20px;top:102.78px;font-size:8.8px;line-height:14.8px;letter-spacing:-0.514px;color:#0a0a0a;">Alpha:</div>
<div class="t" style="left:1792.60px;top:102.78px;font-size:8.8px;line-height:14.8px;letter-spacing:-0.719px;color:#0a0a0a;">1.000</div>
<div class="a num" style="left:1739.2px;top:119.5px;width:88.4px;height:14px;border-radius:7px;overflow:hidden;border-color:#2e2e2e"></div>
<svg class="a" style="left:1743.2px;top:123.875px;" width="3" height="5.25" viewBox="0 0 4 7"><path d="M4 0V7L0 3.500z" fill="#666"/></svg>
<svg class="a" style="left:1820.6px;top:123.875px;" width="3" height="5.25" viewBox="0 0 4 7"><path d="M0 0V7L4 3.500z" fill="#666"/></svg>
<div class="t" style="left:1750.20px;top:119.38px;font-size:8.8px;line-height:14.8px;letter-spacing:-0.347px;color:#0a0a0a;">Z:</div>
<div class="t" style="left:1792.60px;top:119.38px;font-size:8.8px;line-height:14.8px;letter-spacing:-0.719px;color:#0a0a0a;">1.000</div>
<svg class="a" style="left:1727px;top:87.6px;" width="10.6" height="10.6" viewBox="0 0 10.6 10.6"><circle cx="5.3" cy="5.3" r="3.9" fill="#c7c729" stroke="#1e1e1e" stroke-opacity=".75" stroke-width="1"/></svg>
<svg class="a" style="left:1727px;top:103.7px;" width="10.6" height="10.6" viewBox="0 0 10.6 10.6"><circle cx="5.3" cy="5.3" r="3.9" fill="#a1a1a1" stroke="#1e1e1e" stroke-opacity=".75" stroke-width="1"/></svg>
<svg class="a" style="left:1727px;top:120.3px;" width="10.6" height="10.6" viewBox="0 0 10.6 10.6"><circle cx="5.3" cy="5.3" r="3.9" fill="#a1a1a1" stroke="#1e1e1e" stroke-opacity=".75" stroke-width="1"/></svg>
<div class="a " style="left:1734px;top:134.4px;width:103.6px;height:87.6px;background:rgba(106,106,106,.83);box-shadow:0 0 0 1.2px #e8973a,0 2px 7px 1px rgba(0,0,0,.5);border-radius:6.5px"><div class="a " style="left:0px;top:0px;width:103.6px;height:15.4px;border-radius:6.5px 6.5px 0 0;background:rgba(60,60,62,.4)"></div></div>
<svg class="a" style="left:1737.2px;top:139.3px;" width="7.5" height="6.6" viewBox="0 0 7.5 6.6"><path d="M0 0H7.5L3.75 6.6z" fill="#cd5a14" fill-opacity="1"/></svg>
<div class="t" style="left:1749.50px;top:134.68px;font-size:8.8px;line-height:14.8px;letter-spacing:-0.336px;color:#0a0a0a;">Viewer</div>
<svg class="a" style="left:1820.7px;top:136.2px;" width="10.6" height="10.6" viewBox="0 0 16 16"><defs><radialGradient id="gnp" cx=".36" cy=".3" r=".8"><stop offset="0" stop-color="#fff"/><stop offset=".45" stop-color="#d8d8d8"/><stop offset="1" stop-color="#5a5a5a"/></radialGradient></defs><circle cx="8" cy="8" r="6.900" fill="url(#gnp)" stroke="#2a2a2a" stroke-width="1"/><path d="M8 8L14.900 8A6.900 6.900 0 0 1 8 14.900z" fill="#b8503c" opacity=".8"/><path d="M8 8L1.100 8A6.900 6.900 0 0 1 8 1.100z" fill="#b8503c" opacity=".25"/><path d="M8 8L8 1.100A6.900 6.900 0 0 1 14.900 8z" fill="#888" opacity=".3"/></svg>
<div class="a opt" style="left:1742.4px;top:155.3px;width:11px;height:10.5px;"><svg class="a" style="left:-0.4px;top:-2.5px" width="12.6" height="12.0" viewBox="0 0 16 16"><path d="M3.600 8.200L6.600 11.800L13.200 2.600" fill="none" stroke="#fff" stroke-width="1.750" stroke-linecap="round" stroke-linejoin="round"/></svg></div>
<div class="t" style="left:1757.60px;top:153.68px;font-size:8.8px;line-height:14.8px;letter-spacing:-0.540px;color:#fff;">Use Alpha</div>
<div class="t" style="left:1745.80px;top:172.78px;font-size:8.8px;line-height:14.8px;letter-spacing:-0.652px;color:#0a0a0a;">Image</div>
<div class="a num" style="left:1740.3px;top:188.6px;width:89px;height:14px;border-radius:7px;overflow:hidden;border-color:#2e2e2e"></div>
<svg class="a" style="left:1744.3px;top:192.975px;" width="3" height="5.25" viewBox="0 0 4 7"><path d="M4 0V7L0 3.500z" fill="#666"/></svg>
<svg class="a" style="left:1822.3px;top:192.975px;" width="3" height="5.25" viewBox="0 0 4 7"><path d="M0 0V7L4 3.500z" fill="#666"/></svg>
<div class="t" style="left:1751.20px;top:188.78px;font-size:8.8px;line-height:14.8px;letter-spacing:-0.514px;color:#0a0a0a;">Alpha:</div>
<div class="t" style="left:1794.40px;top:188.78px;font-size:8.8px;line-height:14.8px;letter-spacing:-0.719px;color:#0a0a0a;">1.000</div>
<div class="a num" style="left:1740.3px;top:205.1px;width:89px;height:13.6px;border-radius:6.8px;overflow:hidden;border-color:#2e2e2e"></div>
<svg class="a" style="left:1744.3px;top:209.275px;" width="3" height="5.25" viewBox="0 0 4 7"><path d="M4 0V7L0 3.500z" fill="#666"/></svg>
<svg class="a" style="left:1822.3px;top:209.275px;" width="3" height="5.25" viewBox="0 0 4 7"><path d="M0 0V7L4 3.500z" fill="#666"/></svg>
<div class="t" style="left:1751.20px;top:204.58px;font-size:8.8px;line-height:14.8px;letter-spacing:-0.347px;color:#0a0a0a;">Z:</div>
<div class="t" style="left:1794.40px;top:204.58px;font-size:8.8px;line-height:14.8px;letter-spacing:-0.719px;color:#0a0a0a;">1.000</div>
<svg class="a" style="left:1728.2px;top:173.2px;" width="10.6" height="10.6" viewBox="0 0 10.6 10.6"><circle cx="5.3" cy="5.3" r="3.9" fill="#c7c729" stroke="#1e1e1e" stroke-opacity=".75" stroke-width="1"/></svg>
<svg class="a" style="left:1728.2px;top:189.4px;" width="10.6" height="10.6" viewBox="0 0 10.6 10.6"><circle cx="5.3" cy="5.3" r="3.9" fill="#a1a1a1" stroke="#1e1e1e" stroke-opacity=".75" stroke-width="1"/></svg>
<svg class="a" style="left:1728.2px;top:205.7px;" width="10.6" height="10.6" viewBox="0 0 10.6 10.6"><circle cx="5.3" cy="5.3" r="3.9" fill="#a1a1a1" stroke="#1e1e1e" stroke-opacity=".75" stroke-width="1"/></svg>
<div class="a menu" style="left:1098px;top:550px;width:30px;height:20px;border-radius:5px"></div>
<svg class="a" style="left:1101.5px;top:552px;" width="16" height="16" viewBox="0 0 16 16"><rect x="5" y="1.500" width="6.500" height="5" fill="#eee" stroke="#222" stroke-width=".8"/><rect x="1.500" y="9.500" width="6.500" height="5" fill="#eee" stroke="#222" stroke-width=".8"/><path d="M11.500 4C15 4 15 12 8 12" fill="none" stroke="#9bbcf0" stroke-width="1.500"/><circle cx="11.500" cy="4" r="1.100" fill="#f2a23a"/><circle cx="8" cy="12" r="1.100" fill="#f2a23a"/><rect x="6" y="2.800" width="4" height="1" fill="#777"/><rect x="2.500" y="10.800" width="4" height="1" fill="#777"/></svg>
<svg class="a" style="left:1119.1px;top:554.15px;" width="5.4" height="11.7" viewBox="0 0 6 13"><path d="M0 5.200L3 0L6 5.200z M0 7.800L3 13L6 7.800z" fill="#b0b0b0"/></svg>
<div class="t" style="left:1141.30px;top:552.72px;font-size:11px;line-height:17px;letter-spacing:-0.401px;color:#000;">View</div>
<div class="t" style="left:1185.50px;top:552.72px;font-size:11px;line-height:17px;letter-spacing:-0.406px;color:#000;">Select</div>
<div class="t" style="left:1236.20px;top:552.72px;font-size:11px;line-height:17px;letter-spacing:-0.432px;color:#000;">Add</div>
<div class="t" style="left:1275.60px;top:552.72px;font-size:11px;line-height:17px;letter-spacing:-0.552px;color:#000;">Node</div>
<div class="a menu" style="left:1314px;top:550px;width:60px;height:20px;border-radius:5px;overflow:hidden"></div>
<div class="a sel" style="left:1334px;top:551px;width:20px;height:18px;"></div>
<div class="a " style="left:1333.5px;top:551px;width:1px;height:18px;background:#1a1a1a"></div>
<div class="a " style="left:1353.5px;top:551px;width:1px;height:18px;background:#1a1a1a"></div>
<svg class="a" style="left:1316.5px;top:552.5px;opacity:0.72;" width="15" height="15" viewBox="0 0 16 16"><defs><radialGradient id="gm" cx=".4" cy=".35" r=".7"><stop offset="0" stop-color="#eee"/><stop offset=".6" stop-color="#999"/><stop offset="1" stop-color="#444"/></radialGradient></defs><circle cx="8" cy="8" r="6.300" fill="url(#gm)" stroke="#222" stroke-width=".7"/><path d="M8 8L14.300 8A6.300 6.300 0 0 1 8 14.300z" fill="#a9564a" opacity=".8"/><path d="M8 8L1.700 8A6.300 6.300 0 0 1 8 1.700z" fill="#c9c9c9" opacity=".5"/></svg>
<svg class="a" style="left:1336.5px;top:552px;" width="15.5" height="15.5" viewBox="0 0 16 16"><rect x="5" y="5" width="9.500" height="9" fill="#e8d9a8" stroke="#333" stroke-width=".7" transform="rotate(12 10 10)"/><rect x="3" y="3" width="9.500" height="9" fill="#f4f4f4" stroke="#333" stroke-width=".7" transform="rotate(6 8 8)"/><rect x="1.500" y="1.500" width="9.500" height="9" fill="#fff" stroke="#333" stroke-width=".7"/><rect x="5.500" y="3" width="3" height="5" rx="1.200" fill="#4a78c8"/><circle cx="5" cy="8" r="1.600" fill="#bbb" stroke="#444" stroke-width=".4"/><circle cx="3.200" cy="3.200" r=".9" fill="#f3d84a"/></svg>
<svg class="a" style="left:1356.5px;top:552.5px;opacity:0.72;" width="15" height="15" viewBox="0 0 16 16"><rect x="1.500" y="1.500" width="13" height="13" fill="#f0e0e0" stroke="#333" stroke-width=".7"/><rect x="2" y="2" width="3" height="3" fill="#9a2a22"/><rect x="2" y="8" width="3" height="3" fill="#9a2a22"/><rect x="5" y="5" width="3" height="3" fill="#9a2a22"/><rect x="5" y="11" width="3" height="3" fill="#9a2a22"/><rect x="8" y="2" width="3" height="3" fill="#9a2a22"/><rect x="8" y="8" width="3" height="3" fill="#9a2a22"/><rect x="11" y="5" width="3" height="3" fill="#9a2a22"/><rect x="11" y="11" width="3" height="3" fill="#9a2a22"/></svg>
<div class="a opt" style="left:1382px;top:553px;width:14px;height:14px;"><svg class="a" style="left:-0.5px;top:-3.2px" width="16.0" height="16.0" viewBox="0 0 16 16"><path d="M3.600 8.200L6.600 11.800L13.200 2.600" fill="none" stroke="#fff" stroke-width="1.750" stroke-linecap="round" stroke-linejoin="round"/></svg></div>
<div class="t" style="left:1404.40px;top:552.72px;font-size:11px;line-height:17px;letter-spacing:-0.665px;color:#fff;">Use Nodes</div>
<div class="a opt" style="left:1474px;top:553px;width:14px;height:14px;"></div>
<div class="t" style="left:1496.20px;top:552.72px;font-size:11px;line-height:17px;letter-spacing:-0.620px;color:#000;">Free Unused</div>
<div class="a opt" style="left:1575px;top:553px;width:14px;height:14px;"><svg class="a" style="left:-0.5px;top:-3.2px" width="16.0" height="16.0" viewBox="0 0 16 16"><path d="M3.600 8.200L6.600 11.800L13.200 2.600" fill="none" stroke="#fff" stroke-width="1.750" stroke-linecap="round" stroke-linejoin="round"/></svg></div>
<div class="t" style="left:1597.40px;top:552.72px;font-size:11px;line-height:17px;letter-spacing:-0.635px;color:#fff;">Backdrop</div>
<div class="a menu" style="left:1658px;top:550px;width:120px;height:20px;border-radius:5px;overflow:hidden"></div>
<div class="a sel" style="left:1659px;top:551px;width:19px;height:18px;"></div>
<div class="a " style="left:1677.9px;top:551px;width:1px;height:18px;background:#1a1a1a"></div>
<div class="a " style="left:1697.8px;top:551px;width:1px;height:18px;background:#1a1a1a"></div>
<div class="a " style="left:1717.7px;top:551px;width:1px;height:18px;background:#1a1a1a"></div>
<div class="a " style="left:1737.6px;top:551px;width:1px;height:18px;background:#1a1a1a"></div>
<div class="a " style="left:1757.5px;top:551px;width:1px;height:18px;background:#1a1a1a"></div>
<svg class="a" style="left:1660.5px;top:552.5px;" width="15" height="15" viewBox="0 0 16 16"><rect x="1.500" y="1.500" width="13" height="13" fill="#fff" stroke="#222" stroke-width=".9"/><path d="M2 14L14 2V14z" fill="#5a88d8"/><path d="M3 3h3v3h-3z" fill="#d02030"/><path d="M6.500 3h2.500v2.500h-2.500z" fill="#3050c0"/><path d="M3 6.500h2.500v2.500H3z" fill="#e08020"/><path d="M9.500 2.500h2v2h-2z" fill="#d02030"/><path d="M2 14L14 2" stroke="#222" stroke-width="1.100"/><path d="M8 12h1v1H8zM10 10h1v1h-1zM12 12h1v1h-1zM10 13h1v1h-1zM12 8h1v1h-1zM12 5h1v1h-1z" fill="#a8c4f0"/></svg>
<svg class="a" style="left:1680.5px;top:552.5px;opacity:0.8;" width="15" height="15" viewBox="0 0 16 16"><rect x="1.500" y="1.500" width="13" height="13" fill="#e8e0d0" stroke="#333" stroke-width=".8"/><rect x="2" y="2" width="3" height="3" fill="#b02040"/><rect x="2" y="8" width="3" height="3" fill="#b02040"/><rect x="5" y="5" width="3" height="3" fill="#508050"/><rect x="5" y="11" width="3" height="3" fill="#508050"/><rect x="8" y="2" width="3" height="3" fill="#b02040"/><rect x="8" y="8" width="3" height="3" fill="#b02040"/><rect x="11" y="5" width="3" height="3" fill="#c8a040"/><rect x="11" y="11" width="3" height="3" fill="#c8a040"/></svg>
<svg class="a" style="left:1700.3px;top:552.5px;opacity:0.8;" width="15" height="15" viewBox="0 0 16 16"><defs><linearGradient id="gal" x1="0" y1="0" x2="1" y2="1"><stop offset="0" stop-color="#e0e0e0"/><stop offset=".5" stop-color="#9a9a9a"/></linearGradient></defs><rect x="1.800" y="1.800" width="12.400" height="12.400" fill="url(#gal)" stroke="#1c1c1c" stroke-width="1"/><path d="M2.300 13.700L13.700 2.300V13.700z" fill="#2c2c2c"/></svg>
<svg class="a" style="left:1720px;top:552.5px;opacity:0.85;" width="15" height="15" viewBox="0 0 16 16"><defs><radialGradient id="gb8a1414" cx=".4" cy=".35" r=".7"><stop offset="0" stop-color="#e86a6a"/><stop offset="1" stop-color="#8a1414"/></radialGradient></defs><circle cx="8" cy="8" r="6" fill="url(#gb8a1414)" stroke="#222" stroke-width=".7"/></svg>
<svg class="a" style="left:1740px;top:552.5px;opacity:0.85;" width="15" height="15" viewBox="0 0 16 16"><defs><radialGradient id="gb146a14" cx=".4" cy=".35" r=".7"><stop offset="0" stop-color="#6ad86a"/><stop offset="1" stop-color="#146a14"/></radialGradient></defs><circle cx="8" cy="8" r="6" fill="url(#gb146a14)" stroke="#222" stroke-width=".7"/></svg>
<svg class="a" style="left:1760px;top:552.5px;opacity:0.85;" width="15" height="15" viewBox="0 0 16 16"><defs><radialGradient id="gb14148a" cx=".4" cy=".35" r=".7"><stop offset="0" stop-color="#7a7ae8"/><stop offset="1" stop-color="#14148a"/></radialGradient></defs><circle cx="8" cy="8" r="6" fill="url(#gb14148a)" stroke="#222" stroke-width=".7"/></svg>
<div class="a opt" style="left:1786px;top:553px;width:14px;height:14px;"></div>
<div class="t" style="left:1808.40px;top:552.72px;font-size:11px;line-height:17px;letter-spacing:-0.745px;color:#000;">Auto Render</div>
<div class="a tool" style="left:1883px;top:550px;width:20px;height:20px;border-radius:5px"></div>
<svg class="a" style="left:1884.5px;top:552.5px;" width="15" height="15" viewBox="0 0 16 16"><path d="M1.300 14.700L6 10" stroke="#1c1c1c" stroke-width="2.600" stroke-linecap="round"/><path d="M1.300 14.700L6 10" stroke="#e8e8e8" stroke-width="1.100" stroke-linecap="round"/><path d="M3.800 7.800L8.200 12.200L9.800 10.600L9.300 9L12.600 5.700L14.200 6.200L9.800 1.800L10.300 3.400L7 6.700L5.400 6.200z" fill="#efefef" stroke="#1c1c1c" stroke-width="1.100" stroke-linejoin="round"/><path d="M7.500 7.200L10.500 4.200" stroke="#9a9a9a" stroke-width="1.200"/></svg>
<div class="a " style="left:1090px;top:598px;width:804px;height:1px;background:#7a7a7a"></div>
<div class="a menu" style="left:1099px;top:576px;width:30px;height:20px;border-radius:5px"></div>
<svg class="a" style="left:1102.5px;top:578px;" width="16" height="16" viewBox="0 0 16 16"><rect x="1.500" y="2.500" width="13" height="4" rx="1" fill="#eee" stroke="#222" stroke-width=".8"/><rect x="1.500" y="9.500" width="13" height="4" rx="1.800" fill="#eee" stroke="#222" stroke-width=".8"/><rect x="8" y="3.300" width="5.500" height="2.300" fill="#777"/><path d="M3 11.500L4.500 10.300V12.700zM13 11.500L11.500 10.300V12.700z" fill="#222"/></svg>
<svg class="a" style="left:1120.1px;top:580.15px;" width="5.4" height="11.7" viewBox="0 0 6 13"><path d="M0 5.200L3 0L6 5.200z M0 7.800L3 13L6 7.800z" fill="#b0b0b0"/></svg>
<div class="a menu" style="left:1137px;top:576px;width:240px;height:20px;border-radius:5px;overflow:hidden"></div>
<div class="a sel" style="left:1197px;top:577px;width:19.5px;height:18px;"></div>
<svg class="a" style="left:1139.8px;top:578.5px;opacity:0.72;" width="15" height="15" viewBox="0 0 16 16"><rect x="1.300" y="4.300" width="13.400" height="9.700" rx="1.200" fill="#b4b4b4" stroke="#1c1c1c" stroke-width="1"/><rect x="3.800" y="2.300" width="5" height="2.500" fill="#9a9a9a" stroke="#1c1c1c" stroke-width=".9"/><rect x="1.800" y="6.200" width="12.400" height="1.500" fill="#8a8a8a"/><circle cx="9.200" cy="9.300" r="3.500" fill="#3c3c3c" stroke="#1c1c1c" stroke-width=".9"/><circle cx="9.200" cy="9.300" r="2" fill="#7a3040"/><circle cx="8.500" cy="8.600" r=".8" fill="#d8a0a8"/><rect x="2.600" y="5.100" width="2" height="1.100" fill="#d03030"/></svg>
<div class="a " style="left:1157px;top:577px;width:1px;height:18px;background:#1a1a1a"></div>
<svg class="a" style="left:1159.75px;top:578.5px;opacity:0.72;" width="15" height="15" viewBox="0 0 16 16"><rect x="5" y="5" width="9.500" height="9" fill="#e8d9a8" stroke="#333" stroke-width=".7" transform="rotate(12 10 10)"/><rect x="3" y="3" width="9.500" height="9" fill="#f4f4f4" stroke="#333" stroke-width=".7" transform="rotate(6 8 8)"/><rect x="1.500" y="1.500" width="9.500" height="9" fill="#fff" stroke="#333" stroke-width=".7"/><rect x="5.500" y="3" width="3" height="5" rx="1.200" fill="#4a78c8"/><circle cx="5" cy="8" r="1.600" fill="#bbb" stroke="#444" stroke-width=".4"/><circle cx="3.200" cy="3.200" r=".9" fill="#f3d84a"/></svg>
<div class="a " style="left:1177px;top:577px;width:1px;height:18px;background:#1a1a1a"></div>
<svg class="a" style="left:1179.7px;top:578.5px;opacity:0.72;" width="15" height="15" viewBox="0 0 16 16"><defs><radialGradient id="gs" cx=".4" cy=".35" r=".75"><stop offset="0" stop-color="#fff"/><stop offset=".6" stop-color="#d0d0d0"/><stop offset="1" stop-color="#6a6a6a"/></radialGradient><linearGradient id="gc" x1="0" x2="1"><stop offset="0" stop-color="#cfe2fb"/><stop offset=".45" stop-color="#5d8fdc"/><stop offset="1" stop-color="#1f4a9a"/></linearGradient><radialGradient id="gl" cx=".5" cy=".5" r=".5"><stop offset="0" stop-color="#fff"/><stop offset=".45" stop-color="#fff"/><stop offset=".6" stop-color="#d9cf3a"/><stop offset="1" stop-color="#b0a820" stop-opacity=".2"/></radialGradient></defs><path d="M8.800 3.200C8.800 1.500 14.200 1.500 14.200 3.200V10.300C14.200 12 8.800 12 8.800 10.300z" fill="url(#gc)" stroke="#15306a" stroke-width=".9"/><ellipse cx="11.500" cy="3.300" rx="2.300" ry=".9" fill="#e6f0ff" opacity=".8"/><circle cx="6.200" cy="11" r="3.700" fill="url(#gs)" stroke="#1c1c1c" stroke-width="1"/><circle cx="3.300" cy="3.300" r="2.700" fill="url(#gl)"/></svg>
<div class="a " style="left:1197px;top:577px;width:1px;height:18px;background:#1a1a1a"></div>
<svg class="a" style="left:1199.65px;top:578.5px;" width="15" height="15" viewBox="0 0 16 16"><defs><radialGradient id="gw" cx=".38" cy=".32" r=".8"><stop offset="0" stop-color="#e4f0ff"/><stop offset=".45" stop-color="#6a9ce4"/><stop offset="1" stop-color="#1d3f8a"/></radialGradient></defs><circle cx="8" cy="8" r="6.500" fill="url(#gw)" stroke="#f0f0f0" stroke-width="1"/><circle cx="8" cy="8" r="7.200" fill="none" stroke="#2a2a2a" stroke-width=".7"/><path d="M3.500 4.800C5 2.800 8 2.600 9 4C10 5.400 8.500 6 7.500 7.200C6.800 8.200 7.500 9.500 6.500 10.500C5.500 11.300 4.200 10.500 3.500 9C2.800 7.500 2.600 6 3.500 4.800zM10.200 7.500C11.500 6.500 13.600 7.200 13.600 9C13.600 11 12 12.800 10.800 12.600C9.600 12.400 9.200 10.800 9.400 9.600C9.500 8.700 9.600 8 10.200 7.500zM10 2.800C11 2.800 12 3.400 12.500 4.200C11.800 4.600 10.800 4.300 10 2.800z" fill="#3f8f3a" stroke="#1d5a1c" stroke-width=".35"/><ellipse cx="6" cy="4.600" rx="2.600" ry="1.500" fill="#fff" opacity=".35"/></svg>
<div class="a " style="left:1217px;top:577px;width:1px;height:18px;background:#1a1a1a"></div>
<svg class="a" style="left:1219.6px;top:578.5px;opacity:0.72;" width="15" height="15" viewBox="0 0 16 16"><path d="M8 1.2L14.3 4.2V11.6L8 14.8L1.700 11.600V4.200z" fill="#d98a3a" stroke="#6b3d10" stroke-width=".8" stroke-linejoin="round"/><path d="M8 1.2L14.3 4.2L8 7.300L1.700 4.200z" fill="#ffe2b8"/><path d="M1.7 4.2L8 7.300V14.800L1.700 11.600z" fill="#f3b56f"/><path d="M8 7.300V14.8M1.7 4.2L8 7.300L14.300 4.200" fill="none" stroke="#fff3dd" stroke-width=".6"/></svg>
<div class="a " style="left:1237px;top:577px;width:1px;height:18px;background:#1a1a1a"></div>
<svg class="a" style="left:1239.55px;top:578.5px;opacity:0.72;" width="15" height="15" viewBox="0 0 16 16"><rect x="1.500" y="6.500" width="8" height="5" rx="2.500" fill="none" stroke="#222" stroke-width="2.600" transform="rotate(-30 5.500 9)"/><rect x="1.500" y="6.500" width="8" height="5" rx="2.500" fill="none" stroke="#bbb" stroke-width="1.400" transform="rotate(-30 5.500 9)"/><rect x="6.500" y="4.500" width="8" height="5" rx="2.500" fill="none" stroke="#222" stroke-width="2.600" transform="rotate(-30 10.500 7)"/><rect x="6.500" y="4.500" width="8" height="5" rx="2.500" fill="none" stroke="#bbb" stroke-width="1.400" transform="rotate(-30 10.500 7)"/></svg>
<div class="a " style="left:1257px;top:577px;width:1px;height:18px;background:#1a1a1a"></div>
<svg class="a" style="left:1259.5px;top:578.5px;opacity:0.72;" width="15" height="15" viewBox="0 0 16 16"><path d="M2.500 13.500L9 7" stroke="#24417e" stroke-width="3.600" stroke-linecap="round"/><path d="M2.500 13.500L9 7" stroke="#7da0d8" stroke-width="2" stroke-linecap="round"/><path d="M9 3.500A3.500 3.500 0 0 1 13.500 2.500L11.500 5L12.500 6.500L14.500 5A3.500 3.500 0 0 1 8.500 8z" fill="#7da0d8" stroke="#24417e" stroke-width=".8" stroke-linejoin="round"/></svg>
<div class="a " style="left:1277px;top:577px;width:1px;height:18px;background:#1a1a1a"></div>
<svg class="a" style="left:1279.45px;top:578.5px;opacity:0.72;" width="15" height="15" viewBox="0 0 16 16"><path d="M2.500 3L13.500 3L8 13.500z" fill="none" stroke="#222" stroke-width="1.100"/><circle cx="2.500" cy="3" r="1.500" fill="#eee" stroke="#222" stroke-width=".6"/><circle cx="13.500" cy="3" r="1.500" fill="#eee" stroke="#222" stroke-width=".6"/><circle cx="8" cy="13.500" r="1.500" fill="#eee" stroke="#222" stroke-width=".6"/></svg>
<div class="a " style="left:1297px;top:577px;width:1px;height:18px;background:#1a1a1a"></div>
<svg class="a" style="left:1299.4px;top:578.5px;opacity:0.72;" width="15" height="15" viewBox="0 0 16 16"><defs><radialGradient id="gm" cx=".4" cy=".35" r=".7"><stop offset="0" stop-color="#eee"/><stop offset=".6" stop-color="#999"/><stop offset="1" stop-color="#444"/></radialGradient></defs><circle cx="8" cy="8" r="6.300" fill="url(#gm)" stroke="#222" stroke-width=".7"/><path d="M8 8L14.300 8A6.300 6.300 0 0 1 8 14.300z" fill="#a9564a" opacity=".8"/><path d="M8 8L1.700 8A6.300 6.300 0 0 1 8 1.700z" fill="#c9c9c9" opacity=".5"/></svg>
<div class="a " style="left:1317px;top:577px;width:1px;height:18px;background:#1a1a1a"></div>
<svg class="a" style="left:1319.35px;top:578.5px;opacity:0.72;" width="15" height="15" viewBox="0 0 16 16"><rect x="1.500" y="1.500" width="13" height="13" fill="#f0e0e0" stroke="#333" stroke-width=".7"/><rect x="2" y="2" width="3" height="3" fill="#9a2a22"/><rect x="2" y="8" width="3" height="3" fill="#9a2a22"/><rect x="5" y="5" width="3" height="3" fill="#9a2a22"/><rect x="5" y="11" width="3" height="3" fill="#9a2a22"/><rect x="8" y="2" width="3" height="3" fill="#9a2a22"/><rect x="8" y="8" width="3" height="3" fill="#9a2a22"/><rect x="11" y="5" width="3" height="3" fill="#9a2a22"/><rect x="11" y="11" width="3" height="3" fill="#9a2a22"/></svg>
<div class="a " style="left:1336px;top:577px;width:1px;height:18px;background:#1a1a1a"></div>
<svg class="a" style="left:1339.3px;top:578.5px;opacity:0.72;" width="15" height="15" viewBox="0 0 16 16"><path d="M4 0.7999999999999998L4.70 3.30L7.2 4L4.70 4.70L4 7.2L3.30 4.70L0.7999999999999998 4L3.30 3.30z" fill="#fff6c8" stroke="#8a7320" stroke-width=".4"/><path d="M11.5 1.9L12.07 3.93L14.1 4.5L12.07 5.07L11.5 7.1L10.93 5.07L8.9 4.5L10.93 3.93z" fill="#fff6c8" stroke="#8a7320" stroke-width=".4"/><path d="M5 8.9L5.57 10.93L7.6 11.5L5.57 12.07L5 14.1L4.43 12.07L2.4 11.5L4.43 10.93z" fill="#fff6c8" stroke="#8a7320" stroke-width=".4"/><path d="M12 8.5L12.66 10.84L15 11.5L12.66 12.16L12 14.5L11.34 12.16L9 11.5L11.34 10.84z" fill="#fff6c8" stroke="#8a7320" stroke-width=".4"/></svg>
<div class="a " style="left:1356px;top:577px;width:1px;height:18px;background:#1a1a1a"></div>
<svg class="a" style="left:1359.25px;top:578.5px;opacity:0.72;" width="15" height="15" viewBox="0 0 16 16"><path d="M2 8L6.500 13.500L12 4" fill="none" stroke="#24417e" stroke-width="2.800" stroke-linejoin="round"/><path d="M2 8L6.500 13.500L12 4" fill="none" stroke="#6d90cc" stroke-width="1.400" stroke-linejoin="round"/><circle cx="12.500" cy="3.500" r="2.800" fill="#ddd" stroke="#444" stroke-width=".6"/></svg>
<svg class="a" style="left:1100px;top:609.5px;" width="15.5" height="15.5" viewBox="0 0 16 16"><path d="M1.300 14.700L6 10" stroke="#1c1c1c" stroke-width="2.600" stroke-linecap="round"/><path d="M1.300 14.700L6 10" stroke="#e8e8e8" stroke-width="1.100" stroke-linecap="round"/><path d="M3.800 7.800L8.200 12.200L9.800 10.600L9.300 9L12.600 5.700L14.200 6.200L9.800 1.800L10.300 3.400L7 6.700L5.400 6.200z" fill="#efefef" stroke="#1c1c1c" stroke-width="1.100" stroke-linejoin="round"/><path d="M7.500 7.200L10.500 4.200" stroke="#9a9a9a" stroke-width="1.200"/></svg>
<svg class="a" style="left:1122.5px;top:609.5px;" width="15.5" height="15.5" viewBox="0 0 16 16"><defs><radialGradient id="gs" cx=".4" cy=".35" r=".75"><stop offset="0" stop-color="#fff"/><stop offset=".6" stop-color="#d0d0d0"/><stop offset="1" stop-color="#6a6a6a"/></radialGradient><linearGradient id="gc" x1="0" x2="1"><stop offset="0" stop-color="#cfe2fb"/><stop offset=".45" stop-color="#5d8fdc"/><stop offset="1" stop-color="#1f4a9a"/></linearGradient><radialGradient id="gl" cx=".5" cy=".5" r=".5"><stop offset="0" stop-color="#fff"/><stop offset=".45" stop-color="#fff"/><stop offset=".6" stop-color="#d9cf3a"/><stop offset="1" stop-color="#b0a820" stop-opacity=".2"/></radialGradient></defs><path d="M8.800 3.200C8.800 1.500 14.200 1.500 14.200 3.200V10.300C14.200 12 8.800 12 8.800 10.300z" fill="url(#gc)" stroke="#15306a" stroke-width=".9"/><ellipse cx="11.500" cy="3.300" rx="2.300" ry=".9" fill="#e6f0ff" opacity=".8"/><circle cx="6.200" cy="11" r="3.700" fill="url(#gs)" stroke="#1c1c1c" stroke-width="1"/><circle cx="3.300" cy="3.300" r="2.700" fill="url(#gl)"/></svg>
<svg class="a" style="left:1144.5px;top:613.85px;" width="3.6" height="6.3" viewBox="0 0 4 7"><path d="M0 0V7L4 3.500z" fill="#3a3a3a"/></svg>
<svg class="a" style="left:1162.5px;top:609.5px;" width="15.5" height="15.5" viewBox="0 0 16 16"><defs><radialGradient id="gw" cx=".38" cy=".32" r=".8"><stop offset="0" stop-color="#e4f0ff"/><stop offset=".45" stop-color="#6a9ce4"/><stop offset="1" stop-color="#1d3f8a"/></radialGradient></defs><circle cx="8" cy="8" r="6.500" fill="url(#gw)" stroke="#f0f0f0" stroke-width="1"/><circle cx="8" cy="8" r="7.200" fill="none" stroke="#2a2a2a" stroke-width=".7"/><path d="M3.500 4.800C5 2.800 8 2.600 9 4C10 5.400 8.500 6 7.500 7.200C6.800 8.200 7.500 9.500 6.500 10.500C5.500 11.300 4.200 10.500 3.500 9C2.800 7.500 2.600 6 3.500 4.800zM10.200 7.500C11.500 6.500 13.600 7.200 13.600 9C13.600 11 12 12.800 10.800 12.600C9.600 12.400 9.200 10.800 9.400 9.600C9.500 8.700 9.600 8 10.200 7.500zM10 2.800C11 2.800 12 3.400 12.500 4.200C11.800 4.600 10.800 4.300 10 2.800z" fill="#3f8f3a" stroke="#1d5a1c" stroke-width=".35"/><ellipse cx="6" cy="4.600" rx="2.600" ry="1.500" fill="#fff" opacity=".35"/></svg>
<div class="t" style="left:1182.50px;top:609.52px;font-size:11px;line-height:17px;letter-spacing:-0.505px;color:#000;">World</div>
<div class="a menu" style="left:1098px;top:643px;width:32px;height:20px;border-radius:5px 0 0 5px"></div>
<svg class="a" style="left:1101.5px;top:645.3px;" width="15" height="15" viewBox="0 0 16 16"><defs><radialGradient id="gw" cx=".38" cy=".32" r=".8"><stop offset="0" stop-color="#e4f0ff"/><stop offset=".45" stop-color="#6a9ce4"/><stop offset="1" stop-color="#1d3f8a"/></radialGradient></defs><circle cx="8" cy="8" r="6.500" fill="url(#gw)" stroke="#f0f0f0" stroke-width="1"/><circle cx="8" cy="8" r="7.200" fill="none" stroke="#2a2a2a" stroke-width=".7"/><path d="M3.500 4.800C5 2.800 8 2.600 9 4C10 5.400 8.500 6 7.500 7.200C6.800 8.200 7.500 9.500 6.500 10.500C5.500 11.300 4.200 10.500 3.500 9C2.800 7.500 2.600 6 3.500 4.800zM10.200 7.500C11.500 6.500 13.600 7.200 13.600 9C13.600 11 12 12.800 10.800 12.600C9.600 12.400 9.200 10.800 9.400 9.600C9.500 8.700 9.600 8 10.200 7.500zM10 2.800C11 2.800 12 3.400 12.500 4.200C11.800 4.600 10.800 4.300 10 2.800z" fill="#3f8f3a" stroke="#1d5a1c" stroke-width=".35"/><ellipse cx="6" cy="4.600" rx="2.600" ry="1.500" fill="#fff" opacity=".35"/></svg>
<svg class="a" style="left:1120.8px;top:647.15px;" width="5.4" height="11.7" viewBox="0 0 6 13"><path d="M0 5.200L3 0L6 5.200z M0 7.800L3 13L6 7.800z" fill="#b8b8b8"/></svg>
<div class="a txt" style="left:1129px;top:643px;width:578px;height:20px;border-radius:0"></div>
<div class="t" style="left:1137.40px;top:645.92px;font-size:11px;line-height:17px;letter-spacing:-0.505px;color:#000;">World</div>
<div class="a tool" style="left:1706px;top:643px;width:21px;height:20px;border-radius:0"></div>
<div class="t" style="left:1713.39px;top:645.72px;font-size:11px;line-height:17px;letter-spacing:-0.506px;color:#000;">F</div>
<div class="a tool" style="left:1726px;top:643px;width:21px;height:20px;border-radius:0"></div>
<svg class="a" style="left:1729px;top:645.3px;" width="15" height="15" viewBox="0 0 16 16"><path d="M6.400 1.800h3.200v4.600h4.600v3.200h-4.600v4.600h-3.200v-4.600h-4.600v-3.200h4.600z" fill="#fff" stroke="#151515" stroke-width="1" stroke-linejoin="round"/></svg>
<div class="a tool" style="left:1746px;top:643px;width:21px;height:20px;border-radius:0 5px 5px 0"></div>
<svg class="a" style="left:1749px;top:645.3px;" width="15" height="15" viewBox="0 0 16 16"><g transform="rotate(45 8 8)"><path d="M6.500 .800h3v5.700h5.700v3h-5.700v5.700h-3v-5.700h-5.700v-3h5.700z" fill="#fff" stroke="#151515" stroke-width="1" stroke-linejoin="round"/></g></svg>
<div class="a " style="left:1095px;top:670px;width:1794px;height:1px;background:#414141"></div>
<div class="a " style="left:1095px;top:671px;width:1794px;height:1px;background:#7e7e7e"></div>
<svg class="a" style="left:1103.3px;top:678.3px;" width="7.6" height="8.4" viewBox="0 0 7.6 8.4"><path d="M0 0V8.4L7.6 4.2z" fill="#262626"/></svg>
<div class="t" style="left:1115.60px;top:673.94px;font-size:12px;line-height:18px;letter-spacing:-0.526px;color:#000;">Custom Properties</div>
<svg class="a" style="left:1872.6px;top:681.3px;" width="12" height="7" viewBox="0 0 12 7"><rect x="0" y="0.0" width="1.3" height="1.3" fill="#4c4c4c"/><rect x="1" y="1.0" width="1.4" height="1.4" fill="#a4a4a4"/><rect x="0" y="3.5" width="1.3" height="1.3" fill="#4c4c4c"/><rect x="1" y="4.5" width="1.4" height="1.4" fill="#a4a4a4"/><rect x="3" y="0.0" width="1.3" height="1.3" fill="#4c4c4c"/><rect x="4" y="1.0" width="1.4" height="1.4" fill="#a4a4a4"/><rect x="3" y="3.5" width="1.3" height="1.3" fill="#4c4c4c"/><rect x="4" y="4.5" width="1.4" height="1.4" fill="#a4a4a4"/><rect x="6" y="0.0" width="1.3" height="1.3" fill="#4c4c4c"/><rect x="7" y="1.0" width="1.4" height="1.4" fill="#a4a4a4"/><rect x="6" y="3.5" width="1.3" height="1.3" fill="#4c4c4c"/><rect x="7" y="4.5" width="1.4" height="1.4" fill="#a4a4a4"/><rect x="9" y="0.0" width="1.3" height="1.3" fill="#4c4c4c"/><rect x="10" y="1.0" width="1.4" height="1.4" fill="#a4a4a4"/><rect x="9" y="3.5" width="1.3" height="1.3" fill="#4c4c4c"/><rect x="10" y="4.5" width="1.4" height="1.4" fill="#a4a4a4"/></svg>
<div class="a " style="left:1095px;top:694px;width:1794px;height:1px;background:#414141"></div>
<div class="a " style="left:1095px;top:695px;width:1794px;height:1px;background:#7e7e7e"></div>
<svg class="a" style="left:1103.3px;top:702.3px;" width="7.6" height="8.4" viewBox="0 0 7.6 8.4"><path d="M0 0V8.4L7.6 4.2z" fill="#262626"/></svg>
<div class="t" style="left:1115.60px;top:697.94px;font-size:12px;line-height:18px;letter-spacing:-0.387px;color:#000;">Preview</div>
<svg class="a" style="left:1872.6px;top:705.3px;" width="12" height="7" viewBox="0 0 12 7"><rect x="0" y="0.0" width="1.3" height="1.3" fill="#4c4c4c"/><rect x="1" y="1.0" width="1.4" height="1.4" fill="#a4a4a4"/><rect x="0" y="3.5" width="1.3" height="1.3" fill="#4c4c4c"/><rect x="1" y="4.5" width="1.4" height="1.4" fill="#a4a4a4"/><rect x="3" y="0.0" width="1.3" height="1.3" fill="#4c4c4c"/><rect x="4" y="1.0" width="1.4" height="1.4" fill="#a4a4a4"/><rect x="3" y="3.5" width="1.3" height="1.3" fill="#4c4c4c"/><rect x="4" y="4.5" width="1.4" height="1.4" fill="#a4a4a4"/><rect x="6" y="0.0" width="1.3" height="1.3" fill="#4c4c4c"/><rect x="7" y="1.0" width="1.4" height="1.4" fill="#a4a4a4"/><rect x="6" y="3.5" width="1.3" height="1.3" fill="#4c4c4c"/><rect x="7" y="4.5" width="1.4" height="1.4" fill="#a4a4a4"/><rect x="9" y="0.0" width="1.3" height="1.3" fill="#4c4c4c"/><rect x="10" y="1.0" width="1.4" height="1.4" fill="#a4a4a4"/><rect x="9" y="3.5" width="1.3" height="1.3" fill="#4c4c4c"/><rect x="10" y="4.5" width="1.4" height="1.4" fill="#a4a4a4"/></svg>
<div class="a " style="left:1095px;top:718px;width:1794px;height:1px;background:#414141"></div>
<div class="a " style="left:1095px;top:719px;width:1794px;height:1px;background:#7e7e7e"></div>
<svg class="a" style="left:1103px;top:727.4px;" width="8.2" height="8" viewBox="0 0 8.2 8"><path d="M0 0H8.2L4.1 8z" fill="#262626" fill-opacity="1"/></svg>
<div class="t" style="left:1115.60px;top:722.24px;font-size:12px;line-height:18px;letter-spacing:-0.602px;color:#000;">Surface</div>
<svg class="a" style="left:1872.6px;top:729.6px;" width="12" height="7" viewBox="0 0 12 7"><rect x="0" y="0.0" width="1.3" height="1.3" fill="#4c4c4c"/><rect x="1" y="1.0" width="1.4" height="1.4" fill="#a4a4a4"/><rect x="0" y="3.5" width="1.3" height="1.3" fill="#4c4c4c"/><rect x="1" y="4.5" width="1.4" height="1.4" fill="#a4a4a4"/><rect x="3" y="0.0" width="1.3" height="1.3" fill="#4c4c4c"/><rect x="4" y="1.0" width="1.4" height="1.4" fill="#a4a4a4"/><rect x="3" y="3.5" width="1.3" height="1.3" fill="#4c4c4c"/><rect x="4" y="4.5" width="1.4" height="1.4" fill="#a4a4a4"/><rect x="6" y="0.0" width="1.3" height="1.3" fill="#4c4c4c"/><rect x="7" y="1.0" width="1.4" height="1.4" fill="#a4a4a4"/><rect x="6" y="3.5" width="1.3" height="1.3" fill="#4c4c4c"/><rect x="7" y="4.5" width="1.4" height="1.4" fill="#a4a4a4"/><rect x="9" y="0.0" width="1.3" height="1.3" fill="#4c4c4c"/><rect x="10" y="1.0" width="1.4" height="1.4" fill="#a4a4a4"/><rect x="9" y="3.5" width="1.3" height="1.3" fill="#4c4c4c"/><rect x="10" y="4.5" width="1.4" height="1.4" fill="#a4a4a4"/></svg>
<div class="t" style="left:1106.50px;top:754.22px;font-size:11px;line-height:17px;letter-spacing:-0.764px;color:#000;">Surface:</div>
<div class="a menu" style="left:1379px;top:751px;width:507px;height:20px;border-radius:5px"></div>
<div class="t" style="left:1387.00px;top:754.02px;font-size:11px;line-height:17px;letter-spacing:-0.663px;color:#fff;">Background</div>
<svg class="a" style="left:1870.5px;top:757px;" width="8" height="8" viewBox="0 0 8 8"><circle cx="4" cy="4" r="2.400" fill="#2a2a2a" stroke="#c0c0c0" stroke-width="1"/></svg>
<div class="t" style="left:1116.20px;top:789.62px;font-size:11px;line-height:17px;letter-spacing:-0.572px;color:#000;">Color:</div>
<div class="a " style="left:1379px;top:787px;width:507px;height:20px;border-radius:5px;overflow:hidden;border-color:#1a1a1a;background:#1f1f1f"><div class="a menu" style="left:486px;top:-1px;width:20px;height:20px;border-left:1px solid #1a1a1a"></div></div>
<svg class="a" style="left:1870.5px;top:793px;" width="8" height="8" viewBox="0 0 8 8"><circle cx="4" cy="4" r="2.400" fill="#2a2a2a" stroke="#c0c0c0" stroke-width="1"/></svg>
<div class="t" style="left:1116.20px;top:814.92px;font-size:11px;line-height:17px;letter-spacing:-0.755px;color:#000;">Strength:</div>
<div class="a num" style="left:1379px;top:812px;width:488px;height:20px;border-radius:10px 0 0 10px"></div>
<svg class="a" style="left:1385px;top:818.5px;" width="4" height="7" viewBox="0 0 4 7"><path d="M4 0V7L0 3.500z" fill="#6a6a6a"/></svg>
<svg class="a" style="left:1856.5px;top:818.5px;" width="4" height="7" viewBox="0 0 4 7"><path d="M0 0V7L4 3.500z" fill="#6a6a6a"/></svg>
<div class="t" style="left:1819.50px;top:814.72px;font-size:11px;line-height:17px;letter-spacing:-0.198px;color:#000;">1.000</div>
<div class="a menu" style="left:1866px;top:812px;width:20px;height:20px;border-radius:0 5px 5px 0"></div>
<svg class="a" style="left:1870.5px;top:818px;" width="8" height="8" viewBox="0 0 8 8"><circle cx="4" cy="4" r="2.400" fill="#2a2a2a" stroke="#c0c0c0" stroke-width="1"/></svg>
<div class="a " style="left:1095px;top:839px;width:1794px;height:1px;background:#414141"></div>
<div class="a " style="left:1095px;top:840px;width:1794px;height:1px;background:#7e7e7e"></div>
<svg class="a" style="left:1103.3px;top:847.5px;" width="7.6" height="8.4" viewBox="0 0 7.6 8.4"><path d="M0 0V8.4L7.6 4.2z" fill="#262626"/></svg>
<div class="t" style="left:1115.60px;top:843.14px;font-size:12px;line-height:18px;letter-spacing:-0.855px;color:#000;">Volume</div>
<svg class="a" style="left:1872.6px;top:850.5px;" width="12" height="7" viewBox="0 0 12 7"><rect x="0" y="0.0" width="1.3" height="1.3" fill="#4c4c4c"/><rect x="1" y="1.0" width="1.4" height="1.4" fill="#a4a4a4"/><rect x="0" y="3.5" width="1.3" height="1.3" fill="#4c4c4c"/><rect x="1" y="4.5" width="1.4" height="1.4" fill="#a4a4a4"/><rect x="3" y="0.0" width="1.3" height="1.3" fill="#4c4c4c"/><rect x="4" y="1.0" width="1.4" height="1.4" fill="#a4a4a4"/><rect x="3" y="3.5" width="1.3" height="1.3" fill="#4c4c4c"/><rect x="4" y="4.5" width="1.4" height="1.4" fill="#a4a4a4"/><rect x="6" y="0.0" width="1.3" height="1.3" fill="#4c4c4c"/><rect x="7" y="1.0" width="1.4" height="1.4" fill="#a4a4a4"/><rect x="6" y="3.5" width="1.3" height="1.3" fill="#4c4c4c"/><rect x="7" y="4.5" width="1.4" height="1.4" fill="#a4a4a4"/><rect x="9" y="0.0" width="1.3" height="1.3" fill="#4c4c4c"/><rect x="10" y="1.0" width="1.4" height="1.4" fill="#a4a4a4"/><rect x="9" y="3.5" width="1.3" height="1.3" fill="#4c4c4c"/><rect x="10" y="4.5" width="1.4" height="1.4" fill="#a4a4a4"/></svg>
<div class="a " style="left:1095px;top:863px;width:1794px;height:1px;background:#414141"></div>
<div class="a " style="left:1095px;top:864px;width:1794px;height:1px;background:#7e7e7e"></div>
<svg class="a" style="left:1103.3px;top:871.5px;" width="7.6" height="8.4" viewBox="0 0 7.6 8.4"><path d="M0 0V8.4L7.6 4.2z" fill="#262626"/></svg>
<div class="a opt" style="left:1115px;top:869px;width:14px;height:14px;"></div>
<div class="t" style="left:1135.60px;top:867.14px;font-size:12px;line-height:18px;letter-spacing:-0.734px;color:#000;">Ambient Occlusion</div>
<svg class="a" style="left:1883px;top:1px;" width="11" height="11" viewBox="0 0 11 11"><path d="M0 0L11 11" stroke="#a0a0a0" stroke-width="1.1" transform="translate(-.9,.9)"/><path d="M0 0L11 11" stroke="#161616" stroke-width="1.3"/><path d="M4 0L11 7" stroke="#a0a0a0" stroke-width="1.1" transform="translate(-.9,.9)"/><path d="M4 0L11 7" stroke="#161616" stroke-width="1.3"/><path d="M8 0L11 3" stroke="#a0a0a0" stroke-width="1.1" transform="translate(-.9,.9)"/><path d="M8 0L11 3" stroke="#161616" stroke-width="1.3"/></svg>
<svg class="a" style="left:0px;top:19.5px;" width="7" height="6.5" viewBox="0 0 7 6.5"><path d="M0 0L6 6.500" stroke="#a0a0a0" stroke-width="1.2"/><path d="M0 1.800L4.500 6.500" stroke="#161616" stroke-width="1.2"/><path d="M0 4.600L2 6.500" stroke="#9a9a9a" stroke-width="1"/></svg>
<svg class="a" style="left:1078px;top:28px;" width="11" height="11" viewBox="0 0 11 11"><path d="M0 0L11 11" stroke="#a0a0a0" stroke-width="1.1" transform="translate(-.9,.9)"/><path d="M0 0L11 11" stroke="#161616" stroke-width="1.3"/><path d="M4 0L11 7" stroke="#a0a0a0" stroke-width="1.1" transform="translate(-.9,.9)"/><path d="M4 0L11 7" stroke="#161616" stroke-width="1.3"/><path d="M8 0L11 3" stroke="#a0a0a0" stroke-width="1.1" transform="translate(-.9,.9)"/><path d="M8 0L11 3" stroke="#161616" stroke-width="1.3"/></svg>
<svg class="a" style="left:0px;top:469.5px;" width="7" height="6.5" viewBox="0 0 7 6.5"><path d="M0 0L6 6.500" stroke="#a0a0a0" stroke-width="1.2"/><path d="M0 1.800L4.500 6.500" stroke="#161616" stroke-width="1.2"/><path d="M0 4.600L2 6.500" stroke="#9a9a9a" stroke-width="1"/></svg>
<svg class="a" style="left:1078px;top:479px;" width="11" height="11" viewBox="0 0 11 11"><path d="M0 0L11 11" stroke="#a0a0a0" stroke-width="1.1" transform="translate(-.9,.9)"/><path d="M0 0L11 11" stroke="#161616" stroke-width="1.3"/><path d="M4 0L11 7" stroke="#a0a0a0" stroke-width="1.1" transform="translate(-.9,.9)"/><path d="M4 0L11 7" stroke="#161616" stroke-width="1.3"/><path d="M8 0L11 3" stroke="#a0a0a0" stroke-width="1.1" transform="translate(-.9,.9)"/><path d="M8 0L11 3" stroke="#161616" stroke-width="1.3"/></svg>
<svg class="a" style="left:1883px;top:28px;" width="11" height="11" viewBox="0 0 11 11"><path d="M0 0L11 11" stroke="#a0a0a0" stroke-width="1.1" transform="translate(-.9,.9)"/><path d="M0 0L11 11" stroke="#161616" stroke-width="1.3"/><path d="M4 0L11 7" stroke="#a0a0a0" stroke-width="1.1" transform="translate(-.9,.9)"/><path d="M4 0L11 7" stroke="#161616" stroke-width="1.3"/><path d="M8 0L11 3" stroke="#a0a0a0" stroke-width="1.1" transform="translate(-.9,.9)"/><path d="M8 0L11 3" stroke="#161616" stroke-width="1.3"/></svg>
<svg class="a" style="left:1090px;top:565.5px;" width="7" height="6.5" viewBox="0 0 7 6.5"><path d="M0 0L6 6.500" stroke="#a0a0a0" stroke-width="1.2"/><path d="M0 1.800L4.500 6.500" stroke="#161616" stroke-width="1.2"/><path d="M0 4.600L2 6.500" stroke="#9a9a9a" stroke-width="1"/></svg>
<svg class="a" style="left:1883px;top:573px;" width="11" height="11" viewBox="0 0 11 11"><path d="M0 0L11 11" stroke="#a0a0a0" stroke-width="1.1" transform="translate(-.9,.9)"/><path d="M0 0L11 11" stroke="#161616" stroke-width="1.3"/><path d="M4 0L11 7" stroke="#a0a0a0" stroke-width="1.1" transform="translate(-.9,.9)"/><path d="M4 0L11 7" stroke="#161616" stroke-width="1.3"/><path d="M8 0L11 3" stroke="#a0a0a0" stroke-width="1.1" transform="translate(-.9,.9)"/><path d="M8 0L11 3" stroke="#161616" stroke-width="1.3"/></svg>
</div></body></html>
